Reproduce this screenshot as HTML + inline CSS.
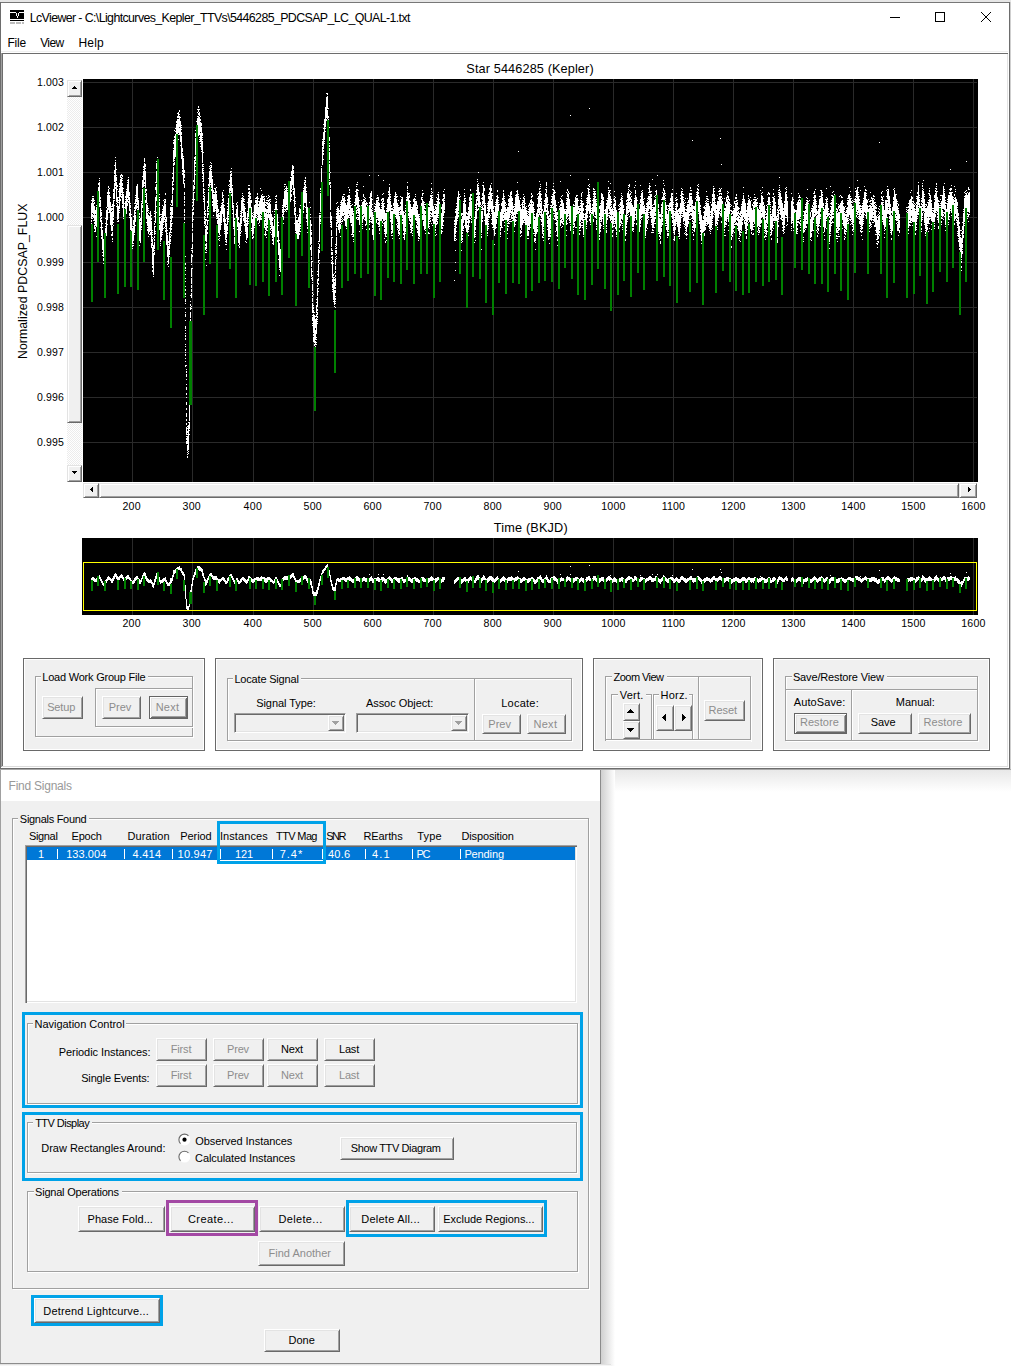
<!DOCTYPE html><html><head><meta charset="utf-8"><title>LcViewer</title><style>
*{margin:0;padding:0;box-sizing:content-box}
html,body{width:1011px;height:1366px;overflow:hidden;background:#fff;position:relative;font-family:"Liberation Sans",sans-serif}
body>div,body>svg{position:absolute}
.t{position:absolute;white-space:nowrap}
.btn{position:absolute;background:#f0f0f0;border:1px solid;border-color:#fff #696969 #696969 #fff;box-shadow:inset 1px 1px #e3e3e3,inset -1px -1px #a0a0a0}
.btnd{position:absolute;background:#f0f0f0;border:1px solid #646464;box-shadow:inset 1px 1px #fff,inset -1px -1px #696969,inset 2px 2px #e3e3e3,inset -2px -2px #a0a0a0}
.grp{position:absolute;border:1px solid #a0a0a0;box-shadow:inset 1px 1px #fff,1px 1px #fff}
.sbtn{position:absolute;background:#f0f0f0;border:1px solid;border-color:#e3e3e3 #696969 #696969 #e3e3e3;box-shadow:inset 1px 1px #fff,inset -1px -1px #a0a0a0}
.pnl{position:absolute;background:#f0f0f0;border:1px solid #696969;box-shadow:inset 1px 1px #fff,inset -1px -1px #fff}
</style></head><body><div style="left:0px;top:0px;width:1011px;height:2px;background:#e6e6e6"></div><div style="left:0px;top:2px;width:1010px;height:767px;background:#fff"></div><div style="left:0px;top:2px;width:1010px;height:1px;background:#777"></div><div style="left:0px;top:2px;width:1px;height:767px;background:#6d6d6d"></div><div style="left:1009px;top:2px;width:1px;height:767px;background:#6d6d6d"></div><div style="left:1010px;top:2px;width:1px;height:767px;background:#cfcfcf"></div><div style="left:0px;top:768px;width:1010px;height:1px;background:#6d6d6d"></div><div style="left:0px;top:769px;width:1011px;height:1px;background:#a8a8a8"></div><div style="left:1px;top:51px;width:1007px;height:1px;background:#f0f0f0"></div><div style="left:1px;top:53px;width:1007px;height:1px;background:#6d6d6d"></div><div style="left:1px;top:53px;width:1px;height:714px;background:#a0a0a0"></div><div style="left:2px;top:54px;width:1px;height:712px;background:#6d6d6d"></div><div style="left:1007px;top:54px;width:1px;height:712px;background:#e3e3e3"></div><div style="left:2px;top:766px;width:1006px;height:1px;background:#dcdcdc"></div><svg style="left:10px;top:10px" width="14" height="14" viewBox="0 0 14 14" shape-rendering="crispEdges"><rect x="0" y="0" width="14" height="2" fill="#000"/><rect x="0" y="3" width="14" height="6" fill="#000"/><path d="M6 2h3v1h-3z" fill="#000"/><path d="M6 3h1v3h1v-3h1v3h-1v2h-1v-2h-1z" fill="#fff"/><rect x="0" y="10" width="14" height="1" fill="#000"/><rect x="0" y="12" width="5" height="2" fill="#bdbdbd"/><rect x="6" y="12" width="5" height="2" fill="#bdbdbd"/><rect x="12" y="12" width="2" height="2" fill="#bdbdbd"/></svg><div class="t" style="left:29.71px;top:11.50px;font-size:12.4px;line-height:12.4px;color:#000;letter-spacing:-0.613px;">LcViewer - C:\Lightcurves_Kepler_TTVs\5446285_PDCSAP_LC_QUAL-1.txt</div><svg style="left:880px;top:5px" width="125" height="25" shape-rendering="crispEdges"><rect x="10" y="12" width="10" height="1" fill="#000"/><rect x="55.5" y="7.5" width="9" height="9" fill="none" stroke="#000" stroke-width="1"/></svg><svg style="left:980px;top:11px" width="13" height="13"><path d="M1 1L11 11M11 1L1 11" stroke="#000" stroke-width="1" fill="none"/></svg><div class="t" style="left:7.44px;top:36.84px;font-size:12px;line-height:12px;color:#000;letter-spacing:-0.193px;">File</div><div class="t" style="left:40.20px;top:36.84px;font-size:12px;line-height:12px;color:#000;letter-spacing:-0.607px;">View</div><div class="t" style="left:78.54px;top:36.84px;font-size:12px;line-height:12px;color:#000;letter-spacing:0.173px;">Help</div><svg style="left:83px;top:79px" width="895" height="403" shape-rendering="crispEdges"><rect width="895" height="403" fill="#000"/><path d="M49.5 0V403M109.5 0V403M170.5 0V403M230.5 0V403M290.5 0V403M350.5 0V403M410.5 0V403M470.5 0V403M530.5 0V403M590.5 0V403M650.5 0V403M710.5 0V403M770.5 0V403M830.5 0V403M890.5 0V403M0 3.5H894M0 48.5H894M0 93.5H894M0 138.5H894M0 183.5H894M0 228.5H894M0 273.5H894M0 318.5H894M0 363.5H894" stroke="#2a2a2a" stroke-width="1"/><path d="M8.5 121v1m0 2v16m0 1v2m0 1v1M9.5 117v1m0 1v15m0 1v3m0 1v1M10.5 117v1m0 1v4m0 1v11m0 1v3m0 2v1M11.5 121v1m0 1v2m0 2v15m0 1v2m0 1v4m0 2v1M12.5 131v4m0 1v11m0 1v5M13.5 126v1m0 1v20m0 9v1M14.5 115v24m0 1v1m0 1v1M15.5 104v2m0 2v18m0 1v2m0 1v2M16.5 99v1m0 1v1m0 1v20m0 1v4M17.5 118v2m0 1v7m0 1v9m0 1v4m0 5v1M18.5 131v1m0 1v4m0 1v2m0 1v16m0 1v2M19.5 144v1m0 3v1m0 2v20m0 2v1m0 2v1M20.5 160v18m0 1v3m0 2v1M21.5 156v5m0 1v17m0 1v1M22.5 139v1m0 4v1m0 2v1m0 1v8m0 1v2m0 1v5m0 1v1m0 1v1m0 1v1m0 1v1M23.5 128v1m0 2v26M24.5 113v2m0 1v12m0 1v12m0 4v1M25.5 107v2m0 1v21m0 2v1M26.5 109v1m0 3v2m0 1v18M27.5 118v1m0 4v23M28.5 127v1m0 1v3m0 1v19m0 3v2M29.5 125v3m0 1v2m0 1v14m0 1v5m0 1v4m0 2v2m0 1v1M30.5 110v3m0 1v6m0 1v17m0 1v2m0 2v1m0 2v1M31.5 86v1m0 4v4m0 1v7m0 1v16m0 1v1m0 4v1M32.5 78v1m0 2v1m0 1v24m0 1v2M33.5 90v1m0 5v1m0 1v4m0 1v20m0 1v1m0 2v1M34.5 106v2m0 2v1m0 7v6m0 1v16m0 1v1M35.5 112v1m0 5v1m0 2v1m0 1v1m0 3v13m0 1v2m0 5v1m0 1v1M36.5 104v2m0 1v1m0 1v21m0 1v1m0 1v1M37.5 96v3m0 1v18m0 2v2M38.5 95v2m0 1v16m0 1v1m0 1v2M39.5 96v2m0 1v1m0 1v1m0 2v3m0 1v17m0 1v3M40.5 109v1m0 3v1m0 1v23m0 1v1M41.5 124v1m0 3v1m0 1v17M42.5 117v2m0 1v1m0 1v20M43.5 110v1m0 1v23M44.5 101v1m0 1v1m0 1v14m0 1v3m0 1v3M45.5 98v1m0 1v21m0 1v2M46.5 113v4m0 1v14m0 2v3m0 1v1M47.5 124v1m0 1v3m0 1v21M48.5 135v1m0 2v22m0 2v1M49.5 147v1m0 1v16m0 1v2m0 1v1M50.5 137v1m0 3v5m0 1v15m0 2v1m0 1v1M51.5 124v1m0 3v2m0 1v23m0 1v1M52.5 116v1m0 1v1m0 1v5m0 1v6m0 1v2m0 1v7m0 3v1M53.5 107v16m0 1v6M54.5 105v21m0 1v2m0 1v2m0 2v1M55.5 119v1m0 1v24m0 1v1m0 1v2M56.5 134v2m0 1v2m0 1v22m0 4v1M57.5 139v3m0 1v21M58.5 122v1m0 1v22m0 1v2m0 1v1M59.5 97v1m0 3v8m0 1v15m0 1v3m0 3v1M60.5 87v2m0 1v1m0 1v16m0 1v3m0 2v1M61.5 79v4m0 1v17m0 2v2m0 1v1M62.5 85v3m0 1v1m0 2v17m0 1v4m0 1v1m0 1v1m0 3v3M63.5 110v2m0 2v10m0 1v15m0 3v1M64.5 124v1m0 1v7m0 1v13m0 1v1m0 1v2M65.5 129v1m0 1v1m0 1v1m0 2v19m0 2v1M66.5 134v1m0 2v16m0 2v1M67.5 132v20m0 1v3M68.5 136v1m0 2v2m0 1v21m0 1v5M69.5 151v1m0 1v1m0 1v1m0 2v1m0 1v7m0 1v18m0 1v2m0 2v2M70.5 159v1m0 6v7m0 1v22m0 1v1M71.5 132v1m0 1v1m0 2v1m0 4v1m0 1v2m0 1v9m0 1v2m0 1v2m0 1v7m0 1v1m0 1v3M72.5 103v1m0 4v3m0 7v26m0 3v1m0 4v1m0 1v1M73.5 82v1m0 1v6m0 2v12m0 1v10m0 1v6m0 5v1m0 5v1M74.5 78v1m0 1v25m0 5v1M75.5 91v1m0 2v1m0 2v1m0 2v14m0 1v8m0 1v7M76.5 115v1m0 2v1m0 1v2m0 1v4m0 1v9m0 1v7m0 1v5M77.5 135v1m0 2v1m0 3v21m0 1v1m0 1v1M78.5 135v1m0 1v1m0 1v19m0 1v2M79.5 126v1m0 3v1m0 1v20m0 1v1m0 1v1M80.5 121v1m0 5v17m0 1v1m0 3v1M81.5 120v1m0 1v15m0 1v3m0 1v1m0 5v1M82.5 114v2m0 4v4m0 1v14m0 1v8m0 1v1m0 1v2M83.5 138v5m0 1v22M84.5 151v1m0 2v1m0 1v22m0 4v1m0 2v1M85.5 162v2m0 1v1m0 1v18m0 2v1M86.5 149v1m0 3v17m0 1v5m0 1v1M87.5 125v1m0 2v4m0 1v3m0 1v3m0 1v13m0 1v1m0 1v2m0 1v3m0 1v1M88.5 121v3m0 2v1m0 1v15m0 1v4m0 1v2m0 2v1m0 2v1M89.5 94v1m0 3v2m0 2v5m0 1v7m0 1v11m0 1v8m0 1v2m0 5v1M90.5 61v1m0 1v2m0 4v1m0 1v12m0 1v3m0 1v15m0 2v1m0 3v2M91.5 51v1m0 5v2m0 1v20m0 1v1m0 1v3M92.5 49v1m0 2v1m0 2v23M93.5 42v2m0 1v18m0 1v2m0 1v1M94.5 34v1m0 2v2m0 1v19M95.5 33v6m0 1v14m0 1v1m0 4v1M96.5 31v2m0 2v1m0 1v11m0 1v7M97.5 38v1m0 3v21m0 3v1M98.5 46v1m0 1v1m0 1v1m0 2v3m0 1v23M99.5 69v4m0 1v16m0 1v2m0 1v2M100.5 77v1m0 1v26M101.5 91v3m0 1v4m0 2v1m0 2v5m0 4v3m0 1v4m0 1v2m0 1v2m0 3v4m0 1v2m0 1v3m0 2v2m0 1v2m0 1v1m0 1v1m0 4v1m0 2v2m0 4v3m0 1v3m0 1v1m0 2v3m0 2v1m0 1v1M102.5 177v1m0 6v2m0 2v2m0 1v1m0 3v1m0 3v1m0 2v1m0 4v1m0 2v2m0 2v2m0 1v1m0 2v3m0 1v1m0 4v1m0 3v1m0 1v3m0 3v1m0 5v3m0 1v1m0 2v1m0 1v2m0 1v2m0 4v1m0 1v1m0 2v2m0 1v1m0 1v2m0 2v1m0 2v1m0 3v2M103.5 286v1m0 3v1m0 1v2m0 1v3m0 2v1m0 4v1m0 2v3m0 3v2m0 2v1m0 4v3m0 3v2m0 3v4m0 2v2m0 2v2m0 2v8m0 1v1m0 1v2m0 1v3M104.5 347v1m0 1v1m0 2v2m0 1v1m0 1v8m0 1v6m0 1v1m0 1v1m0 1v2M105.5 343v1m0 2v25m0 1v1m0 1v1M106.5 312v1m0 2v5m0 1v21m0 1v7m0 1v1m0 3v1M107.5 216v1m0 5v1m0 2v2m0 1v3m0 2v6m0 1v5m0 3v3m0 2v2m0 1v1m0 1v2m0 3v2m0 1v1m0 3v1m0 3v2m0 2v1m0 1v1m0 1v1m0 2v2m0 1v1m0 4v1m0 3v1m0 1v4m0 1v2m0 1v2m0 1v4m0 1v1m0 7v1M108.5 169v1m0 1v1m0 3v9m0 1v1m0 3v9m0 1v6m0 1v3m0 1v3m0 1v5m0 8v1m0 1v1M109.5 120v1m0 2v1m0 2v2m0 2v2m0 1v10m0 1v5m0 1v2m0 2v9m0 2v5m0 1v3m0 2v2m0 11v1M110.5 101v2m0 3v6m0 1v14m0 1v3m0 2v3m0 4v1M111.5 78v2m0 1v25m0 1v3m0 3v1m0 6v1M112.5 51v1m0 2v4m0 1v17m0 1v5m0 1v2m0 2v1m0 3v1m0 3v1M113.5 42v1m0 3v21m0 5v2M114.5 30v1m0 2v1m0 3v1m0 1v10m0 1v7m0 1v2m0 1v1m0 10v1M115.5 27v2m0 1v3m0 1v2m0 1v20M116.5 30v1m0 2v4m0 1v18m0 2v1m0 1v1m0 1v1M117.5 37v1m0 2v2m0 1v10m0 1v9m0 1v1m0 2v1M118.5 44v3m0 1v23m0 1v1M119.5 54v3m0 1v1m0 1v1m0 1v22m0 1v3m0 1v6m0 2v1m0 1v1m0 2v1M120.5 73v1m0 11v1m0 1v1m0 1v1m0 1v1m0 1v10m0 1v4m0 1v6m0 1v2m0 1v2m0 1v1M121.5 110v1m0 2v1m0 1v1m0 1v14m0 1v4m0 1v4m0 1v3m0 1v1M122.5 131v2m0 1v3m0 1v1m0 1v6m0 1v2m0 1v12m0 3v2m0 1v3m0 2v1m0 6v1M123.5 140v2m0 4v17m0 1v6m0 1v1m0 1v1m0 12v1M124.5 122v2m0 3v6m0 1v5m0 2v5m0 1v4m0 2v2M125.5 99v1m0 5v2m0 1v1m0 1v2m0 1v15m0 1v1m0 2v1m0 1v2m0 5v1M126.5 87v1m0 1v1m0 2v22m0 3v1M127.5 83v1m0 2v1m0 1v16m0 1v1M128.5 84v1m0 1v3m0 1v1m0 1v17m0 1v2M129.5 97v1m0 2v20m0 2v2m0 1v2M130.5 111v3m0 1v18m0 3v1M131.5 105v1m0 3v1m0 3v1m0 1v18M132.5 109v21m0 1v1M133.5 108v1m0 3v2m0 1v23m0 1v1M134.5 121v2m0 1v1m0 1v8m0 1v5m0 1v4m0 1v1m0 1v2M135.5 130v3m0 1v20m0 3v1m0 2v1M136.5 134v1m0 1v2m0 1v17m0 1v1m0 1v1m0 1v1m0 4v1M137.5 128v1m0 3v19m0 5v1M138.5 124v1m0 1v18m0 1v1M139.5 113v6m0 1v2m0 1v12M140.5 111v1m0 4v1m0 2v5m0 1v13m0 1v4M141.5 126v1m0 2v22m0 1v1m0 1v1M142.5 140v3m0 1v17m0 1v1m0 2v1M143.5 139v1m0 5v14m0 1v4m0 1v1m0 4v1M144.5 124v1m0 2v1m0 2v1m0 1v14m0 1v5m0 1v2M145.5 106v1m0 9v1m0 2v17m0 1v1m0 1v2m0 1v1M146.5 101v2m0 2v1m0 1v1m0 1v17m0 1v1m0 3v1M147.5 92v2m0 1v17m0 1v2m0 1v1M148.5 89v1m0 2v1m0 1v3m0 1v16m0 1v2M149.5 106v1m0 2v20m0 1v1m0 3v1M150.5 124v1m0 1v22m0 1v1M151.5 139v2m0 1v15m0 1v7M152.5 135v1m0 3v2m0 2v19m0 1v2M153.5 124v2m0 1v1m0 2v21m0 3v1M154.5 123v1m0 2v22m0 2v1M155.5 138v3m0 2v21m0 2v1M156.5 144v22m0 1v2M157.5 132v1m0 1v1m0 1v2m0 1v13m0 1v2m0 1v1M158.5 119v1m0 1v24m0 1v1m0 5v1M159.5 114v1m0 1v1m0 1v14m0 1v1m0 3v1M160.5 117v1m0 1v4m0 1v14m0 1v3M161.5 120v1m0 1v1m0 2v1m0 1v17m0 1v2M162.5 129v1m0 3v20m0 1v1m0 7v1M163.5 139v1m0 1v2m0 1v17m0 2v1M164.5 123v1m0 8v1m0 1v13m0 1v11M165.5 106v1m0 2v2m0 2v2m0 1v2m0 1v19m0 1v1m0 2v1m0 1v1M166.5 106v1m0 2v2m0 1v18M167.5 114v2m0 1v3m0 1v18m0 2v1M168.5 121v3m0 4v16m0 5v1m0 1v1M169.5 134v1m0 1v2m0 2v17m0 1v2M170.5 133v1m0 1v1m0 1v18m0 2v2M171.5 126v21m0 1v1M172.5 119v1m0 1v3m0 1v17m0 1v1m0 2v1M173.5 118v2m0 1v14m0 1v1m0 1v1M174.5 114v2m0 1v19m0 1v1m0 1v3M175.5 119v1m0 2v1m0 2v2m0 1v13m0 3v1M176.5 122v22m0 2v1M177.5 109v1m0 9v16m0 1v5M178.5 111v1m0 4v20m0 1v1m0 1v2M179.5 115v1m0 1v19m0 1v2M180.5 117v2m0 1v1m0 2v19m0 1v2m0 2v1m0 2v1M181.5 117v1m0 1v19m0 1v1m0 1v8m0 6v1M182.5 123v1m0 1v2m0 2v4m0 1v9m0 1v3m0 1v3m0 1v5M183.5 117v1m0 3v1m0 1v2m0 1v1m0 3v22m0 3v1m0 2v1M184.5 119v1m0 1v1m0 1v3m0 1v2m0 1v4m0 1v11m0 1v2m0 2v1M185.5 116v1m0 1v1m0 2v2m0 1v15m0 2v2m0 1v1m0 1v1m0 1v1M186.5 117v1m0 2v2m0 1v11m0 1v7m0 1v3M187.5 120v1m0 1v1m0 2v21m0 1v1m0 1v2m0 2v1M188.5 135v15m0 1v1m0 3v1M189.5 132v1m0 5v4m0 1v16m0 1v2m0 2v1M190.5 139v1m0 7v19M191.5 130v1m0 1v1m0 2v1m0 1v2m0 1v18M192.5 117v1m0 1v1m0 3v1m0 1v19m0 2v2m0 5v1M193.5 116v2m0 2v1m0 1v2m0 1v19m0 1v1M194.5 130v1m0 4v23m0 3v2M195.5 143v1m0 2v1m0 5v24m0 4v1M196.5 161v1m0 2v25m0 1v1m0 5v1M197.5 170v23M198.5 140v1m0 6v1m0 1v2m0 1v6m0 1v5m0 1v2m0 1v3m0 1v6m0 1v1M199.5 126v1m0 1v1m0 1v4m0 1v11m0 1v2m0 2v4m0 1v2m0 1v1M200.5 120v16m0 1v4m0 3v1M201.5 105v1m0 1v1m0 2v1m0 1v16m0 2v1m0 1v1M202.5 105v1m0 3v1m0 1v18m0 1v2M203.5 107v19m0 1v1m0 1v2m0 1v1M204.5 109v1m0 1v1m0 1v18M205.5 111v4m0 1v18m0 4v1M206.5 107v3m0 2v14m0 1v2m0 1v2m0 1v1M207.5 98v1m0 3v21M208.5 92v5m0 1v12m0 1v2m0 2v3m0 2v1M209.5 86v20m0 4v1M210.5 87v3m0 1v4m0 1v15m0 1v4m0 5v1M211.5 109v19m0 1v7m0 8v1M212.5 118v1m0 3v1m0 1v1m0 3v5m0 1v18m0 1v1M213.5 138v1m0 2v20M214.5 136v1m0 4v19M215.5 138v5m0 1v16M216.5 129v5m0 1v18m0 1v2M217.5 126v1m0 3v15m0 1v2m0 1v1m0 2v1M218.5 123v1m0 1v2m0 1v17M219.5 116v2m0 1v2m0 1v2m0 1v12m0 1v4m0 2v1M220.5 109v1m0 1v20m0 1v2M221.5 101v1m0 1v3m0 1v17m0 3v1M222.5 98v2m0 1v3m0 1v19m0 4v1M223.5 108v1m0 3v1m0 1v20m0 1v5m0 2v1M224.5 128v19m0 1v2m0 3v1M225.5 133v1m0 1v21m0 2v1M226.5 123v1m0 8v2m0 1v3m0 1v16m0 1v5M227.5 128v1m0 6v1m0 2v1m0 2v25m0 2v3M228.5 145v2m0 4v1m0 1v3m0 2v7m0 1v11m0 1v3m0 1v6m0 1v9m0 1v1M229.5 182v1m0 9v1m0 3v1m0 1v4m0 1v1m0 1v7m0 1v2m0 1v2m0 1v4m0 1v10m0 2v1m0 1v4m0 2v1m0 1v1M230.5 215v1m0 10v1m0 1v2m0 1v3m0 1v19m0 1v2m0 1v5M231.5 233v1m0 2v28m0 1v2m0 2v1m0 1v2M232.5 237v1m0 2v9m0 2v10m0 1v4m0 1v2m0 1v1M233.5 220v1m0 2v1m0 2v8m0 1v3m0 1v16m0 3v1m0 1v1m0 2v1m0 1v1M234.5 192v1m0 2v1m0 4v5m0 1v2m0 1v8m0 1v10m0 2v2m0 1v3m0 1v2m0 1v1m0 1v1m0 1v1M235.5 162v1m0 1v1m0 3v1m0 1v10m0 1v3m0 1v13m0 1v3m0 2v2m0 3v1m0 2v1M236.5 134v1m0 1v27m0 2v5m0 1v3m0 7v1m0 2v1M237.5 109v2m0 1v1m0 1v19m0 1v1m0 1v3m0 1v3m0 1v1M238.5 87v1m0 1v15m0 1v9m0 7v2m0 5v1M239.5 60v1m0 1v5m0 1v18M240.5 45v1m0 3v1m0 3v17m0 1v2m0 1v2m0 4v1M241.5 40v21m0 1v1m0 1v1M242.5 28v20m0 1v1m0 2v1M243.5 14v1m0 3v21m0 1v2M244.5 14v2m0 1v13m0 1v9m0 1v5m0 1v1M245.5 29v1m0 7v2m0 1v22M246.5 48v1m0 9v4m0 2v1m0 1v2m0 1v3m0 1v8m0 1v2m0 1v8m0 1v6m0 1v1m0 1v3M247.5 93v1m0 9v2m0 1v3m0 1v21m0 2v11m0 1v1m0 1v1M248.5 137v4m0 1v7m0 2v6m0 1v10m0 1v3m0 1v3m0 2v1m0 2v1m0 1v2M249.5 158v1m0 12v1m0 1v3m0 1v4m0 1v17m0 1v3m0 2v4m0 1v1m0 1v1M250.5 184v1m0 10v2m0 1v23m0 1v1M251.5 194v1m0 3v1m0 1v2m0 1v7m0 1v15m0 1v1m0 14v2M252.5 165v1m0 1v1m0 1v1m0 1v3m0 1v1m0 2v1m0 1v6m0 1v4m0 1v2m0 2v2m0 1v8m0 1v2m0 1v3m0 3v1m0 1v2m0 1v1m0 1v1m0 3v1M253.5 124v1m0 5v1m0 1v1m0 1v2m0 1v3m0 1v1m0 1v5m0 1v8m0 1v9m0 1v2m0 1v4m0 2v1m0 1v1M254.5 123v1m0 4v17m0 2v1M255.5 127v1m0 1v15m0 1v6M256.5 131v2m0 1v1m0 1v18M257.5 123v1m0 1v1m0 1v17m0 1v5m0 7v1M258.5 121v18m0 1v1m0 1v1m0 1v1M259.5 117v5m0 1v14m0 2v1m0 1v2M260.5 115v1m0 1v1m0 1v14m0 1v3m0 3v1M261.5 115v1m0 2v18m0 1v5M262.5 121v1m0 2v23M263.5 126v22m0 1v1M264.5 117v1m0 2v2m0 1v21M265.5 108v1m0 7v19m0 1v3m0 3v1M266.5 110v2m0 1v1m0 2v14m0 1v6m0 1v1M267.5 119v1m0 2v1m0 1v1m0 1v18M268.5 126v1m0 2v15m0 1v2m0 8v1M269.5 125v1m0 3v7m0 1v19m0 1v1M270.5 132v1m0 1v20m0 1v3m0 2v1m0 1v1M271.5 123v1m0 2v5m0 1v20M272.5 112v1m0 3v2m0 1v22m0 1v1m0 1v1M273.5 105v1m0 1v1m0 2v16m0 2v2m0 1v4m0 3v2M274.5 103v1m0 1v1m0 4v2m0 1v16m0 1v2m0 1v1m0 2v1m0 1v1m0 1v1M275.5 111v1m0 6v17m0 1v1m0 1v3M276.5 121v1m0 4v2m0 1v17m0 6v1M277.5 131v1m0 1v1m0 1v14m0 1v4m0 1v1M278.5 121v1m0 4v1m0 2v1m0 1v1m0 1v19m0 3v1M279.5 123v13m0 1v7m0 1v1m0 1v1m0 1v1M280.5 107v1m0 7v3m0 2v1m0 1v13m0 1v4M281.5 118v1m0 1v18m0 2v1M282.5 119v1m0 1v2m0 1v18m0 3v2M283.5 123v3m0 2v18m0 4v1M284.5 124v1m0 1v1m0 2v2m0 1v1m0 1v18M285.5 130v3m0 1v2m0 1v14m0 1v3m0 2v1M286.5 96v1m0 21v1m0 4v2m0 1v14m0 1v3m0 1v1m0 3v2M287.5 114v24m0 2v1m0 1v1M288.5 112v6m0 1v10m0 1v11m0 1v2M289.5 120v1m0 4v1m0 3v1m0 1v1m0 1v12m0 1v3m0 1v6M290.5 136v1m0 1v23M291.5 124v1m0 2v1m0 2v1m0 1v19m0 1v2m0 2v1m0 3v1M292.5 125v1m0 1v13m0 1v8m0 1v1M293.5 119v1m0 1v18m0 1v4M294.5 116v1m0 1v2m0 1v18m0 1v1m0 3v1M295.5 96v1m0 21v4m0 1v19m0 1v3m0 1v1M296.5 124v3m0 1v20m0 1v3m0 2v1M297.5 130v24M298.5 120v2m0 2v1m0 1v1m0 1v1m0 1v18m0 1v1m0 2v1M299.5 115v1m0 3v2m0 1v18m0 2v2m0 2v1M300.5 101v1m0 12v1m0 4v4m0 1v18m0 2v1M301.5 124v1m0 2v1m0 3v11m0 1v6m0 1v3m0 1v1m0 4v1M302.5 134v7m0 1v16m0 4v2M303.5 129v1m0 1v2m0 1v21m0 2v1m0 3v1M304.5 120v4m0 1v19m0 4v1M305.5 112v2m0 1v1m0 2v20m0 2v1M306.5 105v1m0 2v24M307.5 115v1m0 1v2m0 1v1m0 1v18m0 1v2M308.5 126v2m0 1v2m0 1v19m0 1v3m0 1v1M309.5 129v2m0 1v13m0 1v8m0 2v1m0 2v1M310.5 124v3m0 1v1m0 1v19M311.5 117v1m0 1v22m0 1v1m0 2v1M312.5 113v23m0 1v1M313.5 115v1m0 1v2m0 1v20m0 5v1M314.5 117v1m0 6v19m0 1v1m0 1v3m0 1v1M315.5 121v1m0 4v1m0 1v22m0 1v4m0 1v1M316.5 128v4m0 1v1m0 1v1m0 1v15m0 1v3m0 3v1M317.5 117v1m0 5v2m0 2v4m0 1v15m0 2v1m0 1v1M318.5 118v1m0 1v21m0 2v2M319.5 118v21m0 1v2m0 1v2M320.5 132v20m0 2v2m0 2v1M321.5 133v1m0 2v25M322.5 126v1m0 2v1m0 1v2m0 1v14m0 1v4m0 1v1M323.5 118v1m0 1v20m0 1v1m0 3v1M324.5 103v1m0 3v3m0 1v1m0 1v19m0 7v1M325.5 114v2m0 1v16m0 1v3m0 1v1M326.5 114v1m0 1v3m0 2v21m0 2v1M327.5 122v1m0 2v14m0 1v3m0 2v4m0 1v1m0 2v1M328.5 128v1m0 1v24M329.5 128v19m0 1v2m0 1v1m0 2v1m0 1v1M330.5 120v3m0 2v18m0 1v2m0 1v3M331.5 119v24m0 3v1M332.5 115v1m0 1v1m0 2v1m0 1v16m0 1v2M333.5 122v5m0 1v14m0 1v1m0 2v3M334.5 126v4m0 1v15m0 1v4m0 1v2M335.5 135v22m0 1v2m0 1v1M336.5 135v1m0 1v1m0 1v19m0 1v1M337.5 130v1m0 2v19m0 1v1m0 1v1m0 6v1M338.5 118v3m0 3v22m0 2v1m0 2v1M339.5 111v1m0 2v3m0 1v1m0 1v15m0 1v5M340.5 114v1m0 7v19m0 1v5M341.5 123v1m0 1v1m0 1v3m0 1v20M342.5 125v1m0 3v1m0 2v3m0 1v14m0 1v1m0 2v1M343.5 136v1m0 1v2m0 1v16m0 1v1m0 1v1m0 1v2M344.5 134v1m0 1v21m0 1v1m0 1v1M345.5 125v1m0 2v21m0 4v2M346.5 122v5m0 1v13m0 1v1m0 1v1m0 2v1m0 1v1m0 4v1M347.5 116v2m0 1v13m0 1v2m0 1v2m0 1v1m0 1v2M348.5 104v1m0 4v2m0 1v1m0 1v1m0 1v16m0 2v2m0 1v1m0 6v1M349.5 113v1m0 2v1m0 1v1m0 1v18m0 2v2m0 4v1M350.5 127v18m0 1v7M351.5 125v1m0 4v1m0 1v3m0 1v16m0 10v1M352.5 125v1m0 1v3m0 1v4m0 1v13m0 1v2m0 1v1m0 2v1M353.5 118v1m0 3v1m0 2v2m0 1v15m0 1v2m0 9v1M354.5 115v1m0 3v2m0 1v17m0 1v1m0 1v3M355.5 113v1m0 1v20m0 1v1m0 1v1M356.5 120v1m0 2v17m0 1v4m0 4v1M357.5 126v22m0 1v1m0 1v1M358.5 128v2m0 4v16m0 1v4M359.5 120v2m0 3v22m0 1v2m0 2v1M360.5 112v1m0 2v3m0 1v18m0 1v1m0 2v2m0 3v1M361.5 110v1m0 4v5m0 1v1m0 1v8m0 1v2M371.5 141v2m0 1v2m0 1v1m0 1v13m0 39v1M372.5 130v1m0 1v2m0 3v18m0 1v2m0 1v1m0 1v1m0 9v1m0 11v1m0 7v1M373.5 124v1m0 2v1m0 1v17m0 2v1m0 3v1m0 7v1M374.5 118v22m0 1v1M375.5 112v20m0 1v2m0 1v2M376.5 115v1m0 2v1m0 1v24m0 4v1M377.5 117v1m0 9v3m0 1v20m0 1v1M378.5 134v3m0 3v22m0 1v1m0 7v1M379.5 134v2m0 1v15m0 1v2m0 1v2m0 1v2m0 1v1M380.5 122v1m0 1v20m0 3v3m0 1v1M381.5 110v1m0 3v1m0 1v2m0 1v22m0 5v1M382.5 119v1m0 1v2m0 2v24M383.5 133v2m0 2v16m0 1v9m0 1v1M384.5 134v2m0 1v4m0 1v2m0 2v10m0 1v5m0 3v1m0 1v1M385.5 128v3m0 1v19m0 1v1m0 3v1M386.5 118v4m0 1v17m0 1v3m0 3v1M387.5 110v2m0 3v22m0 2v1M388.5 115v2m0 2v2m0 1v17m0 1v1m0 1v2M389.5 121v2m0 3v20m0 3v1m0 10v1M390.5 131v21m0 1v3M391.5 138v1m0 1v19m0 4v1M392.5 125v2m0 1v1m0 1v1m0 1v15m0 1v3m0 2v1m0 1v1m0 1v1m0 3v1M393.5 111v1m0 2v2m0 2v1m0 1v20M394.5 100v1m0 1v1m0 2v11m0 1v5m0 2v2m0 4v2M395.5 93v1m0 10v1m0 1v1m0 1v20m0 1v2M396.5 113v3m0 1v26M397.5 123v3m0 1v1m0 1v16m0 2v1m0 1v1M398.5 119v1m0 6v1m0 1v1m0 1v1m0 1v22m0 1v1m0 1v2m0 11v1M399.5 106v1m0 7v3m0 1v3m0 1v4m0 1v4m0 1v8m0 1v2M400.5 103v1m0 2v19m0 1v1m0 2v2M401.5 109v3m0 4v21m0 4v1M402.5 124v1m0 1v25m0 1v1M403.5 135v24M404.5 124v1m0 1v1m0 1v2m0 1v1m0 2v18m0 1v2m0 1v1M405.5 115v1m0 1v3m0 2v17m0 1v1m0 1v1m0 1v2m0 1v1m0 1v1M406.5 109v2m0 2v3m0 1v16m0 1v2m0 1v2M407.5 106v24m0 6v1M408.5 104v1m0 4v3m0 2v7m0 1v11m0 1v1m0 5v1m0 3v1M409.5 114v1m0 1v1m0 3v26m0 2v1M410.5 127v3m0 1v18m0 1v1M411.5 127v1m0 5v24m0 8v1M412.5 123v1m0 1v1m0 1v23m0 4v1M413.5 117v1m0 2v19m0 1v5m0 3v1M414.5 111v2m0 3v21m0 1v1M415.5 118v1m0 2v1m0 1v1m0 1v26m0 1v1M416.5 125v1m0 6v2m0 1v1m0 1v18m0 1v1m0 1v1M417.5 133v14m0 1v4m0 1v3m0 1v1M418.5 124v3m0 3v19M419.5 119v2m0 1v20m0 6v1M420.5 111v2m0 1v21m0 1v3m0 1v2M421.5 117v1m0 1v1m0 1v12m0 1v7m0 2v1m0 2v1m0 5v1M422.5 123v2m0 1v1m0 1v22M423.5 125v1m0 4v2m0 1v18m0 1v2M424.5 128v15m0 1v1m0 1v2m0 1v3m0 2v1m0 4v1M425.5 116v1m0 3v3m0 1v3m0 1v14m0 1v2m0 2v1M426.5 117v1m0 1v20m0 1v1m0 1v1m0 1v1M427.5 113v21m0 1v1m0 4v1m0 1v1M428.5 112v4m0 1v14m0 1v3m0 1v4m0 2v1M429.5 119v3m0 1v14m0 1v2m0 1v2m0 1v2m0 2v1m0 1v1M430.5 127v2m0 1v1m0 2v15m0 1v2m0 2v1M431.5 125v1m0 1v1m0 1v7m0 1v11m0 4v1M432.5 116v1m0 1v21m0 1v3m0 2v1M433.5 112v1m0 2v20m0 3v1m0 2v1M434.5 103v1m0 7v22m0 1v1M435.5 72v1m0 42v1m0 1v20m0 3v2M436.5 121v20m0 2v3m0 1v3M437.5 119v1m0 6v1m0 1v21m0 2v4m0 2v1M438.5 125v1m0 4v21m0 1v2m0 2v1M439.5 121v1m0 1v23M440.5 115v1m0 2v2m0 1v3m0 1v1m0 1v2m0 1v10m0 1v3M441.5 117v1m0 1v23m0 1v1M442.5 124v1m0 3v20m0 3v1M443.5 127v1m0 1v1m0 1v20m0 1v2M444.5 132v1m0 1v1m0 1v21m0 2v1M445.5 126v2m0 2v1m0 1v2m0 1v1m0 1v10m0 1v3m0 1v5m0 2v1M446.5 124v3m0 1v23M447.5 121v3m0 1v20m0 3v1M448.5 114v2m0 1v2m0 1v18m0 2v1m0 2v1M449.5 116v2m0 4v2m0 1v13m0 1v3m0 1v1m0 1v3M450.5 123v4m0 1v22m0 4v1M451.5 130v1m0 1v1m0 2v1m0 1v3m0 1v12m0 1v1m0 1v1m0 2v4M452.5 138v20m0 1v3m0 1v1m0 6v1M453.5 134v21M454.5 115v1m0 3v1m0 5v3m0 2v17m0 1v1m0 1v3M455.5 114v1m0 2v17m0 1v3m0 2v1m0 1v3m0 1v1M456.5 102v1m0 6v2m0 1v16m0 1v7M457.5 105v1m0 1v1m0 1v1m0 2v1m0 1v9m0 1v7m0 1v2m0 1v2m0 3v1M458.5 115v1m0 3v2m0 1v17m0 1v3m0 2v1M459.5 130v2m0 3v20m0 2v2M460.5 126v1m0 5v16m0 1v1m0 1v2m0 1v3m0 1v1m0 2v1M461.5 121v2m0 1v1m0 1v17m0 1v4M462.5 110v1m0 3v4m0 1v15m0 1v2m0 1v1M463.5 103v4m0 1v1m0 1v4m0 1v14m0 2v2m0 1v2M464.5 118v6m0 1v15m0 1v4m0 1v2m0 2v1M465.5 125v1m0 6v3m0 2v21m0 1v2M466.5 136v2m0 1v19m0 1v1m0 4v1M467.5 126v1m0 1v1m0 1v4m0 1v15m0 1v4m0 1v2M468.5 117v1m0 2v1m0 1v2m0 2v5m0 1v16m0 1v1M469.5 110v1m0 4v1m0 1v10m0 1v10m0 1v2M470.5 104v1m0 2v1m0 2v2m0 1v13m0 1v5m0 2v1m0 4v1M471.5 111v4m0 1v17m0 1v1m0 1v2m0 2v1M472.5 113v1m0 7v20m0 3v1m0 7v1M473.5 126v1m0 2v3m0 1v9m0 1v4m0 1v4m0 4v1M474.5 133v3m0 1v3m0 1v17m0 2v2m0 4v1M475.5 123v1m0 10v3m0 1v17m0 1v2M476.5 127v1m0 1v3m0 2v20m0 2v1M477.5 102v1m0 16v1m0 2v1m0 2v2m0 1v12m0 1v6M478.5 117v1m0 2v7m0 1v11m0 1v4m0 4v1M479.5 116v1m0 4v20m0 1v3m0 2v1M480.5 124v19m0 1v2M481.5 130v16m0 1v3m0 4v2M482.5 130v1m0 1v19m0 3v2m0 1v1m0 3v1M483.5 113v1m0 5v1m0 1v1m0 1v3m0 1v2m0 1v10m0 1v5m0 5v1m0 4v1M484.5 110v2m0 2v4m0 1v19m0 2v1m0 3v1M485.5 112v2m0 1v20m0 1v1m0 2v1M486.5 114v1m0 5v22m0 1v1M487.5 36v1m0 59v1m0 30v17m0 1v1m0 1v5M488.5 129v1m0 1v21m0 1v2m0 1v1m0 1v1M489.5 133v22m0 1v1m0 3v1M490.5 125v2m0 1v18m0 1v2m0 1v1m0 1v3M491.5 122v1m0 3v1m0 1v15m0 1v4M492.5 118v24m0 6v1M493.5 116v2m0 1v17m0 1v1m0 10v1M494.5 116v1m0 2v25m0 2v1M495.5 121v1m0 5v4m0 1v17m0 1v1m0 2v2M496.5 127v1m0 1v5m0 1v12m0 1v2m0 1v1m0 2v2M497.5 121v1m0 2v1m0 1v2m0 1v3m0 1v10m0 1v5m0 2v1M498.5 114v4m0 1v1m0 1v20m0 2v1m0 2v1M499.5 113v1m0 8v1m0 1v18m0 1v1m0 2v1m0 1v1M500.5 124v2m0 3v3m0 2v5m0 1v16m0 1v1M501.5 135v1m0 2v1m0 1v22m0 1v1M502.5 127v1m0 2v1m0 3v21m0 3v2M503.5 119v1m0 1v1m0 1v1m0 2v20m0 1v1m0 1v1M504.5 109v1m0 6v1m0 1v17m0 1v3m0 3v1M505.5 100v1m0 5v1m0 2v16m0 1v6M506.5 29v1m0 75v1m0 1v1m0 2v1m0 2v1m0 1v20m0 2v1m0 2v2M507.5 119v1m0 1v2m0 1v10m0 1v9m0 1v1M508.5 129v1m0 1v1m0 1v20m0 3v1m0 1v1M509.5 121v1m0 3v2m0 1v17m0 1v1m0 1v2m0 6v1M510.5 109v2m0 1v1m0 1v2m0 1v1m0 1v18m0 3v3M511.5 110v1m0 1v21m0 4v1M512.5 112v1m0 1v2m0 1v2m0 1v16m0 1v2M513.5 120v1m0 1v1m0 1v3m0 1v12m0 1v5m0 1v1m0 1v2M514.5 125v1m0 5v1m0 1v22m0 2v2M515.5 134v1m0 2v23M516.5 127v3m0 4v3m0 1v17m0 1v2m0 1v2M517.5 124v1m0 1v15m0 1v1m0 1v6m0 1v2M518.5 114v6m0 1v22m0 3v1M519.5 115v23m0 1v1M520.5 118v3m0 1v24m0 1v1m0 1v1M521.5 131v1m0 2v1m0 1v19m0 1v1m0 3v1M522.5 130v21m0 2v1m0 1v2m0 4v1M523.5 121v1m0 2v2m0 1v18m0 1v2m0 1v1m0 1v3M524.5 119v1m0 1v17m0 1v2M525.5 102v1m0 5v2m0 1v1m0 1v17m0 4v1m0 1v1M526.5 111v3m0 1v17m0 1v2m0 1v3M527.5 104v1m0 6v1m0 2v1m0 2v10m0 1v8m0 1v5M528.5 120v1m0 1v2m0 1v1m0 1v2m0 1v11m0 1v6m0 1v1M529.5 129v7m0 1v12m0 2v3m0 2v2M530.5 120v1m0 4v4m0 1v1m0 1v13m0 2v1m0 3v1M531.5 112v1m0 4v1m0 1v4m0 1v14m0 1v2m0 1v1m0 1v1m0 1v2M532.5 118v1m0 2v6m0 1v17m0 3v2M533.5 131v21m0 1v3m0 1v1M534.5 133v1m0 3v3m0 1v15m0 1v1m0 2v1M535.5 126v1m0 3v1m0 2v6m0 1v15m0 1v1m0 1v2M536.5 125v1m0 1v1m0 1v2m0 1v17m0 2v2M537.5 120v1m0 2v4m0 1v7m0 1v8m0 1v2M538.5 114v1m0 1v1m0 1v22m0 2v3M539.5 117v1m0 1v1m0 1v20m0 3v1m0 1v1m0 1v1m0 1v1M540.5 126v3m0 1v13m0 1v5m0 1v1m0 7v1M541.5 130v1m0 5v1m0 1v1m0 1v21m0 2v1m0 3v1M542.5 136v21m0 3v2M543.5 121v2m0 1v2m0 1v19m0 1v2m0 2v1m0 2v1M544.5 114v5m0 1v2m0 1v12m0 1v1m0 1v3m0 1v1M545.5 106v1m0 1v1m0 1v1m0 1v18m0 1v3m0 1v1M546.5 105v3m0 3v1m0 3v7m0 1v10m0 4v1M547.5 112v1m0 1v2m0 2v3m0 1v15m0 1v1m0 2v2m0 2v1M548.5 113v1m0 3v1m0 2v3m0 1v20m0 1v1m0 1v1M549.5 126v22m0 1v3M550.5 128v20m0 1v2m0 1v1M551.5 108v1m0 10v1m0 1v21m0 2v1M552.5 102v1m0 3v1m0 4v4m0 1v16m0 3v1m0 2v1M553.5 118v11m0 1v11m0 3v2M554.5 121v1m0 6v9m0 1v16m0 1v1m0 2v1M555.5 131v2m0 1v2m0 2v1m0 1v18m0 3v1M556.5 124v1m0 5v23M557.5 106v1m0 10v1m0 2v4m0 1v15m0 1v4m0 1v2M558.5 112v1m0 1v22m0 1v2m0 1v1M559.5 111v1m0 1v22m0 2v1M560.5 120v1m0 1v4m0 1v19m0 1v1m0 1v1M561.5 119v1m0 6v29M562.5 129v1m0 1v1m0 1v24m0 1v1M563.5 124v2m0 1v1m0 1v20m0 2v1M564.5 119v1m0 1v1m0 1v17m0 1v4m0 4v1M565.5 109v1m0 3v1m0 3v4m0 1v10m0 1v1m0 1v1m0 1v2m0 1v1M566.5 104v1m0 1v8m0 1v1m0 1v9m0 1v3m0 3v1M567.5 107v1m0 4v2m0 1v16m0 1v5m0 1v1M568.5 112v1m0 2v3m0 1v20m0 1v4m0 1v1m0 7v1M569.5 100v1m0 25v1m0 1v1m0 1v19m0 1v2m0 1v1M570.5 125v1m0 2v21m0 2v1m0 1v1M571.5 117v1m0 3v5m0 2v9m0 1v5m0 1v1m0 3v1M572.5 106v1m0 5v1m0 3v1m0 1v1m0 1v13m0 1v3m0 1v2m0 4v1M573.5 111v9m0 2v17m0 1v1M574.5 96v1m0 24v2m0 1v2m0 1v19m0 1v1M575.5 125v4m0 1v23m0 1v1M576.5 133v1m0 1v3m0 1v16m0 1v2m0 2v1M577.5 135v3m0 2v16m0 1v3m0 2v3M578.5 120v1m0 4v2m0 1v20m0 1v4M579.5 113v1m0 4v3m0 2v12m0 1v2m0 1v4m0 1v2M580.5 101v1m0 2v1m0 4v3m0 2v19m0 1v1M581.5 106v1m0 4v5m0 1v16m0 1v2m0 2v2m0 3v1M582.5 114v1m0 1v1m0 2v1m0 1v1m0 1v17m0 1v1m0 2v1m0 1v1M583.5 126v5m0 1v13m0 1v1m0 1v3M584.5 126v1m0 3v1m0 4v18m0 1v3m0 1v1M585.5 126v2m0 1v1m0 1v20m0 1v1m0 1v3M586.5 124v21m0 1v3m0 2v1M587.5 119v3m0 1v5m0 1v12m0 2v2M588.5 114v21m0 2v1M589.5 110v1m0 3v2m0 1v23m0 1v3m0 2v1M590.5 123v1m0 1v1m0 3v1m0 1v16m0 1v4m0 1v1m0 6v1M591.5 132v1m0 1v3m0 1v1m0 1v16m0 1v5M592.5 119v1m0 1v1m0 3v1m0 1v1m0 1v2m0 1v15m0 1v3M593.5 114v1m0 3v1m0 1v2m0 1v20m0 1v1M594.5 120v1m0 3v4m0 3v17M595.5 130v3m0 1v19m0 1v1m0 2v1M596.5 129v6m0 1v22m0 1v1M597.5 116v1m0 2v1m0 4v20m0 1v2m0 1v1M598.5 109v1m0 2v23m0 1v1m0 1v1M599.5 110v1m0 1v1m0 1v2m0 1v16m0 1v1m0 1v2M600.5 115v1m0 2v1m0 1v1m0 1v16m0 1v4m0 1v1M601.5 121v1m0 2v1m0 1v1m0 1v14m0 3v1m0 1v1m0 6v1M602.5 119v1m0 3v1m0 6v1m0 2v14m0 1v2m0 1v1m0 1v1m0 1v1M603.5 127v1m0 2v2m0 1v20m0 1v3m0 2v1M604.5 119v1m0 3v1m0 1v23m0 7v1M605.5 121v3m0 1v16m0 1v3M606.5 114v20m0 1v2m0 3v1M607.5 108v2m0 1v1m0 2v2m0 1v10m0 1v5m0 1v2m0 4v1M608.5 111v1m0 2v2m0 1v16m0 1v3m0 2v1M609.5 61v1m0 59v4m0 1v14m0 1v2m0 1v1m0 2v2m0 1v1m0 2v1M610.5 127v3m0 1v10m0 1v7m0 2v1m0 3v2m0 3v1M611.5 127v4m0 1v21M612.5 119v1m0 3v21m0 1v4M613.5 113v1m0 1v1m0 1v2m0 1v20m0 1v2M614.5 106v1m0 2v2m0 1v22m0 2v1m0 3v2M615.5 105v1m0 1v1m0 2v2m0 1v2m0 1v17m0 1v1M616.5 118v4m0 1v19m0 1v2M617.5 126v2m0 1v1m0 1v19m0 1v2m0 2v1M618.5 136v26m0 2v1M619.5 141v17m0 1v4M620.5 128v1m0 4v1m0 3v3m0 1v12m0 2v3m0 1v1m0 2v2M621.5 127v3m0 2v20m0 2v3M622.5 122v1m0 1v1m0 1v1m0 1v19m0 1v3M623.5 112v1m0 4v1m0 1v1m0 1v1m0 1v14m0 1v5m0 1v1m0 1v1M624.5 117v1m0 1v2m0 1v1m0 1v22M625.5 120v1m0 1v1m0 1v21m0 2v1M626.5 127v23m0 1v1M627.5 123v1m0 8v2m0 1v1m0 1v14m0 1v1m0 1v1M628.5 125v2m0 2v20m0 1v1M629.5 115v3m0 1v21m0 1v1m0 1v1m0 1v1m0 3v1M630.5 107v1m0 1v13m0 1v9m0 2v1m0 2v1M631.5 109v1m0 2v1m0 2v19m0 1v1M632.5 119v1m0 3v1m0 1v23M633.5 126v4m0 1v14m0 1v6M634.5 116v1m0 5v20m0 1v3m0 2v1m0 1v1M635.5 112v1m0 5v3m0 1v17m0 2v1M636.5 109v1m0 1v2m0 1v2m0 1v15m0 1v2M637.5 59v1m0 50v3m0 1v1m0 2v13m0 2v1m0 1v3M638.5 85v1m0 23v1m0 4v2m0 1v2m0 1v18m0 4v2M639.5 119v1m0 2v5m0 1v10m0 1v4m0 1v1m0 1v1m0 6v1M640.5 125v1m0 3v1m0 1v2m0 1v16m0 1v5m0 2v1M641.5 119v1m0 9v2m0 1v17m0 1v2m0 1v1m0 2v1M642.5 123v4m0 2v13m0 1v3m0 1v1m0 8v1M643.5 118v5m0 2v18m0 1v2M644.5 112v1m0 1v1m0 1v3m0 1v18m0 1v1M645.5 113v1m0 3v4m0 1v21m0 3v1m0 4v1M646.5 120v2m0 1v24M647.5 125v1m0 1v1m0 3v1m0 3v4m0 1v10m0 1v3m0 2v1M648.5 126v1m0 4v2m0 1v2m0 1v20m0 1v3m0 6v2M649.5 132v3m0 2v18m0 1v2M650.5 127v1m0 1v1m0 1v19m0 1v2M651.5 122v3m0 4v15m0 1v1m0 1v2m0 4v1M652.5 118v2m0 2v1m0 1v19m0 1v2M653.5 115v2m0 1v2m0 1v2m0 1v14m0 1v2m0 2v3m0 1v1M654.5 121v1m0 1v3m0 1v5m0 1v4m0 1v4m0 2v3m0 2v1M655.5 128v3m0 1v3m0 1v16m0 7v1M656.5 129v1m0 4v2m0 1v2m0 1v16m0 1v1m0 1v1m0 1v1M657.5 132v5m0 1v13m0 1v2m0 1v2m0 5v1M658.5 125v1m0 1v8m0 1v16m0 1v1M659.5 120v1m0 1v20m0 1v3M660.5 108v1m0 5v1m0 1v22m0 2v1M661.5 120v20m0 1v4M662.5 124v18m0 1v7m0 1v1m0 1v2M663.5 131v2m0 1v21m0 2v3M664.5 124v2m0 1v16m0 1v3m0 3v1M665.5 116v2m0 1v1m0 1v17m0 1v2m0 2v1M666.5 120v23m0 2v1M667.5 118v1m0 3v28M668.5 121v1m0 7v23m0 1v2M669.5 125v2m0 4v20m0 4v1M670.5 120v1m0 2v2m0 1v17m0 2v1m0 1v1m0 2v1m0 3v2M671.5 115v1m0 2v1m0 1v1m0 1v7m0 1v15m0 2v1M672.5 118v1m0 1v19m0 1v1m0 1v1m0 1v1m0 2v1M673.5 120v2m0 1v14m0 1v3m0 1v5m0 3v1M674.5 119v1m0 3v2m0 1v1m0 1v20m0 4v1M675.5 130v17m0 1v4m0 1v1m0 1v1M676.5 124v1m0 1v4m0 1v17m0 1v1m0 1v3M677.5 111v1m0 12v21m0 1v2M678.5 114v1m0 1v17m0 1v5m0 2v3M679.5 108v1m0 4v1m0 3v21m0 3v1m0 1v1M680.5 119v1m0 3v3m0 1v14m0 1v4M681.5 126v24m0 1v1m0 1v1m0 3v2M682.5 132v2m0 1v1m0 2v1m0 2v12m0 1v1m0 1v2m0 2v1M683.5 126v1m0 3v1m0 3v2m0 1v7m0 1v5m0 1v5m0 1v1M684.5 115v1m0 6v1m0 2v1m0 1v18m0 2v1m0 4v1M685.5 113v2m0 3v19m0 1v1m0 1v1m0 1v1m0 1v1M686.5 114v2m0 2v25m0 2v1M687.5 123v1m0 1v1m0 1v1m0 1v2m0 1v2m0 1v16m0 2v1m0 1v2M688.5 135v1m0 1v19m0 3v2M689.5 118v1m0 3v1m0 4v2m0 1v19m0 2v1M690.5 110v1m0 3v2m0 2v20m0 1v3m0 4v1m0 2v1M691.5 117v1m0 1v23m0 1v1M692.5 123v2m0 1v25m0 1v1m0 1v1m0 3v1M693.5 137v19m0 4v1m0 3v1M694.5 130v2m0 1v1m0 1v3m0 1v19m0 1v5M695.5 111v1m0 1v1m0 1v1m0 1v1m0 2v6m0 1v3m0 1v10m0 1v1m0 3v2M696.5 98v1m0 7v1m0 1v1m0 1v2m0 1v16m0 1v2m0 2v1M697.5 112v1m0 1v22m0 3v1M698.5 118v2m0 1v20M699.5 124v15m0 1v2m0 1v3m0 2v1m0 2v1M700.5 129v2m0 1v21m0 1v1M701.5 122v2m0 1v21m0 1v2m0 1v1m0 2v1M702.5 109v1m0 3v23m0 2v1M703.5 108v1m0 1v1m0 1v2m0 1v22m0 1v1m0 7v1M704.5 118v1m0 3v21m0 2v1M708.5 114v1m0 7v23m0 2v1m0 1v1m0 1v1M709.5 118v24m0 1v1M710.5 120v1m0 2v2m0 2v22m0 2v1M711.5 130v4m0 2v2m0 1v14m0 1v3m0 2v1m0 1v2M712.5 131v2m0 3v3m0 1v2m0 1v3m0 1v12m0 2v1m0 2v1m0 1v1M713.5 125v1m0 5v24M714.5 123v18m0 1v2m0 1v2m0 2v2m0 1v1m0 1v1M715.5 114v1m0 3v1m0 2v20m0 1v2M716.5 116v3m0 1v2m0 1v17m0 3v2M717.5 118v1m0 2v17m0 1v1m0 1v2m0 1v3m0 1v1m0 2v1M718.5 126v26m0 2v3M719.5 125v1m0 7v22m0 1v3M720.5 132v1m0 3v1m0 3v1m0 1v12m0 4v1m0 1v1m0 1v1M721.5 132v18m0 1v2M722.5 125v1m0 1v3m0 1v18m0 1v1M723.5 118v1m0 2v1m0 1v11m0 1v6m0 1v3m0 2v2M724.5 110v1m0 8v1m0 1v24M725.5 122v1m0 1v1m0 1v1m0 1v16m0 1v1m0 1v1m0 6v1M726.5 121v1m0 7v1m0 1v17m0 2v3M727.5 133v5m0 2v19m0 1v1M728.5 129v1m0 1v2m0 5v15m0 1v4m0 3v1M729.5 126v2m0 1v23M730.5 114v1m0 3v1m0 2v1m0 1v3m0 1v14m0 2v1m0 7v1M731.5 112v3m0 1v18m0 1v3M732.5 110v1m0 5v3m0 1v17m0 2v1m0 2v2M733.5 122v1m0 1v1m0 1v3m0 1v6m0 1v8m0 1v1m0 4v1M734.5 132v3m0 1v15m0 1v2m0 2v2M735.5 126v3m0 1v18m0 1v3m0 2v1M736.5 117v1m0 2v25m0 1v1M737.5 111v1m0 5v1m0 1v14m0 2v3m0 1v1m0 7v1M738.5 111v24m0 1v1M739.5 113v1m0 1v2m0 1v24m0 2v1M740.5 124v3m0 1v3m0 1v16m0 5v1M741.5 130v23m0 3v1m0 3v1M742.5 120v1m0 3v1m0 1v23M743.5 109v1m0 8v1m0 1v16m0 1v3m0 1v1m0 7v1M744.5 119v2m0 1v1m0 1v21M745.5 129v2m0 1v1m0 1v3m0 1v15m0 2v1M746.5 134v2m0 1v2m0 2v3m0 1v10m0 1v7m0 1v1m0 4v1M747.5 107v1m0 16v1m0 2v1m0 3v3m0 1v2m0 1v15m0 1v1m0 1v1M748.5 116v1m0 4v1m0 1v3m0 1v15m0 1v2m0 1v1M749.5 113v1m0 2v2m0 1v17m0 1v3m0 2v2M750.5 112v1m0 4v16m0 1v2m0 1v2m0 4v1M751.5 115v1m0 1v1m0 3v1m0 1v16m0 1v1m0 1v1M752.5 122v1m0 3v16m0 1v3m0 1v1m0 1v1m0 1v1M753.5 124v1m0 4v2m0 1v16m0 1v5m0 2v2m0 1v1M754.5 130v3m0 1v16m0 1v3m0 3v1m0 1v1m0 2v1M755.5 125v1m0 1v3m0 3v19m0 1v1m0 1v1m0 1v1M756.5 117v1m0 8v3m0 1v2m0 1v15m0 1v2m0 6v1M757.5 116v1m0 7v21m0 1v1m0 1v1M758.5 117v2m0 3v23m0 2v1M759.5 118v1m0 2v20m0 3v1m0 4v1M760.5 124v1m0 2v20M761.5 128v3m0 1v1m0 1v15m0 1v5m0 2v1m0 1v2M762.5 127v1m0 5v1m0 1v2m0 1v12m0 1v2m0 1v2m0 2v1M763.5 129v1m0 1v3m0 1v16m0 1v1M764.5 119v1m0 1v1m0 1v3m0 2v10m0 1v4m0 1v1m0 1v1m0 1v1M765.5 116v4m0 1v17m0 1v1m0 1v1m0 1v2M766.5 108v1m0 6v21m0 4v1M767.5 112v1m0 4v1m0 1v20m0 1v2m0 3v1M768.5 119v1m0 2v2m0 1v16m0 1v1m0 1v1M769.5 121v1m0 1v1m0 3v2m0 1v16m0 1v1m0 2v2m0 3v1M770.5 122v1m0 4v1m0 1v15m0 1v6m0 1v1M771.5 120v1m0 1v1m0 1v17m0 4v2M772.5 109v1m0 2v1m0 4v1m0 1v16m0 1v2m0 6v1M773.5 111v8m0 1v13m0 1v1m0 1v2M774.5 101v1m0 6v23m0 1v4m0 2v1M775.5 108v1m0 4v1m0 1v1m0 1v17m0 1v1m0 1v1m0 1v1M776.5 117v1m0 2v2m0 1v2m0 1v15m0 1v3M777.5 111v1m0 14v2m0 1v7m0 1v9m0 1v1m0 1v1m0 1v2M778.5 127v1m0 1v1m0 1v3m0 1v16m0 1v2m0 2v1M779.5 124v1m0 1v21m0 1v2m0 2v1m0 7v1M780.5 119v1m0 1v18m0 1v1m0 1v1m0 1v1M781.5 107v1m0 5v20m0 2v1M782.5 110v2m0 1v21m0 2v1M783.5 111v1m0 2v1m0 1v1m0 3v20M784.5 121v3m0 2v25M785.5 120v1m0 6v1m0 2v22M786.5 122v1m0 3v2m0 1v16m0 1v2m0 1v1m0 2v1M787.5 113v1m0 7v2m0 1v1m0 1v15m0 2v4m0 1v1M788.5 118v2m0 1v1m0 2v2m0 1v15m0 3v1m0 1v1M789.5 119v9m0 1v10m0 1v1m0 2v1M790.5 116v2m0 1v1m0 1v11m0 1v3m0 1v2m0 1v2m0 1v1M791.5 117v1m0 2v1m0 2v2m0 1v17m0 3v2M792.5 123v1m0 1v1m0 1v3m0 1v17m0 3v1m0 3v1M793.5 126v1m0 1v2m0 2v1m0 4v17m0 1v1m0 4v1m0 3v1M794.5 136v1m0 1v1m0 2v20m0 1v1m0 1v2m0 2v1M795.5 129v1m0 2v1m0 2v1m0 1v19m0 1v3m0 2v2M796.5 63v1m0 63v1m0 2v1m0 2v2m0 1v15m0 1v2m0 1v2M797.5 126v20m0 1v1m0 1v1m0 2v1M798.5 113v2m0 2v2m0 1v1m0 2v19m0 1v2M799.5 112v1m0 5v4m0 1v13m0 1v4m0 1v1M800.5 117v1m0 3v1m0 1v1m0 1v1m0 1v19M801.5 131v19m0 1v1m0 2v1m0 3v1M802.5 121v27m0 2v1M803.5 111v1m0 5v1m0 3v24M804.5 107v1m0 2v1m0 1v8m0 1v2m0 1v11m0 3v4M805.5 110v18m0 1v1m0 1v4M806.5 117v19m0 1v3m0 1v2m0 1v2M807.5 125v3m0 1v21m0 1v1m0 1v1M808.5 132v2m0 2v20m0 3v2M809.5 128v8m0 1v15M810.5 110v1m0 7v3m0 1v25m0 6v1M811.5 109v1m0 1v24M812.5 115v19m0 1v4m0 1v1M813.5 115v1m0 4v16m0 1v5m0 2v1M814.5 122v1m0 1v1m0 2v15m0 1v1m0 1v7M815.5 125v2m0 2v1m0 1v21m0 4v1M816.5 135v5m0 1v8m0 2v3M823.5 128v1m0 1v1m0 1v1m0 1v4m0 1v2m0 1v4m0 1v1m0 2v1m0 1v1M824.5 128v1m0 2v1m0 1v18m0 1v2M825.5 124v1m0 2v2m0 1v19m0 1v2m0 2v1M826.5 121v20m0 1v2m0 1v2M827.5 113v1m0 6v24m0 2v1M828.5 111v1m0 5v13m0 1v6m0 2v3m0 1v1M829.5 118v2m0 2v1m0 1v19m0 3v1M830.5 122v2m0 1v22m0 1v1M831.5 124v1m0 1v2m0 1v23m0 7v1M832.5 125v1m0 4v1m0 1v20m0 2v2M833.5 117v1m0 1v1m0 3v2m0 1v17m0 1v2m0 2v1m0 1v1M834.5 113v2m0 2v19m0 1v1m0 1v1M835.5 103v1m0 2v20m0 1v1m0 1v4m0 1v2M836.5 116v1m0 1v1m0 1v3m0 1v20m0 3v1M837.5 127v2m0 2v1m0 2v1m0 1v20m0 2v1m0 1v1M838.5 119v1m0 1v2m0 1v2m0 1v16m0 1v3m0 2v2m0 1v1M839.5 104v1m0 1v2m0 1v1m0 1v13m0 1v3m0 1v3m0 2v3m0 1v1m0 1v1M840.5 101v1m0 8v1m0 1v20m0 1v1M841.5 115v1m0 1v1m0 2v13m0 1v10m0 1v1M842.5 125v1m0 1v1m0 1v21m0 1v1m0 1v2m0 1v1M843.5 125v2m0 2v24M844.5 123v1m0 3v11m0 1v6m0 1v1m0 1v3M845.5 114v1m0 6v1m0 1v22m0 7v1M846.5 109v1m0 1v2m0 1v3m0 1v1m0 1v18m0 1v2m0 3v1m0 4v1M847.5 116v22m0 1v1M848.5 121v2m0 1v18m0 3v1m0 4v1M849.5 129v1m0 1v1m0 1v18m0 5v2m0 4v1M850.5 129v1m0 1v2m0 1v23M851.5 116v3m0 1v1m0 2v20m0 1v1m0 1v2m0 1v1M852.5 109v1m0 1v2m0 1v20m0 1v3M853.5 104v2m0 1v1m0 1v2m0 1v20m0 1v1M854.5 112v1m0 5v15m0 1v2m0 1v2m0 1v1M855.5 121v2m0 1v20m0 3v3M856.5 122v1m0 3v1m0 1v3m0 2v19m0 1v2M857.5 116v1m0 3v1m0 3v1m0 1v1m0 1v1m0 1v17m0 1v3m0 7v1M858.5 116v1m0 5v15m0 1v2m0 2v2m0 1v1M859.5 116v14m0 1v7m0 1v1M860.5 107v23m0 3v1m0 1v2m0 3v1M861.5 104v1m0 5v1m0 1v1m0 1v17m0 2v2m0 2v1M862.5 118v1m0 2v1m0 1v2m0 1v20m0 1v1m0 3v1M863.5 124v1m0 5v16m0 1v1m0 2v3m0 3v1M864.5 120v1m0 1v1m0 1v21m0 5v1M865.5 116v25m0 2v1m0 1v1M866.5 110v1m0 2v2m0 1v19m0 2v1m0 2v1M867.5 90v1m0 18v3m0 1v17m0 1v1M868.5 106v1m0 2v2m0 2v21m0 2v1M869.5 113v1m0 3v25M870.5 118v1m0 1v24m0 5v1M871.5 107v1m0 7v2m0 2v1m0 1v2m0 1v18m0 2v2M872.5 110v1m0 1v1m0 5v17m0 2v3M873.5 120v19m0 1v2m0 1v1M874.5 123v4m0 1v1m0 1v10m0 1v6m0 1v1m0 3v1m0 1v1m0 1v1M875.5 134v3m0 1v20m0 1v1m0 1v2M876.5 143v2m0 2v21m0 1v2m0 2v1m0 1v1M877.5 151v1m0 4v1m0 1v18m0 1v1m0 1v3m0 6v1M878.5 151v1m0 2v1m0 4v20m0 1v1m0 1v2m0 3v2m0 2v1M879.5 143v1m0 3v4m0 1v12m0 1v4m0 1v1m0 1v3M880.5 130v1m0 1v1m0 1v21m0 1v3M881.5 113v1m0 3v1m0 1v24m0 1v1m0 1v1M882.5 112v1m0 1v1m0 1v20m0 4v1M883.5 82v1m0 28v1m0 2v23M884.5 113v1m0 2v17m0 1v2m0 1v1m0 1v1M885.5 108v3m0 3v19m0 2v3m0 4v1M886.5 110v1m0 2v21m0 1v1" stroke="#fff" stroke-width="1"/><path d="M8 145h2v78h-2zM14 112h2v71h-2zM21 154h2v65h-2zM34 145h2v70h-2zM41 130h2v78h-2zM47 152h2v56h-2zM54 131h2v80h-2zM60 109h2v74h-2zM74 80h2v91h-2zM80 162h2v59h-2zM87 178h2v71h-2zM93 55h2v73h-2zM100 144h2v75h-2zM106 242h3v84h-3zM113 46h2v76h-2zM120 156h2v80h-2zM126 108h2v77h-2zM133 146h2v73h-2zM146 114h2v76h-2zM152 139h2v80h-2zM166 129h2v77h-2zM172 139h2v68h-2zM179 133h2v70h-2zM185 141h2v76h-2zM192 131h2v72h-2zM198 138h2v78h-2zM205 102h2v77h-2zM212 155h2v72h-2zM218 113h2v64h-2zM225 129h2v80h-2zM231 268h2v64h-2zM238 103h2v69h-2zM244 41h2v76h-2zM251 231h2v63h-2zM258 146h2v63h-2zM264 140h2v62h-2zM271 127h2v68h-2zM277 127h2v72h-2zM284 127h2v68h-2zM291 133h2v84h-2zM297 142h2v79h-2zM304 133h2v66h-2zM310 135h2v68h-2zM317 136h2v69h-2zM323 122h2v69h-2zM330 136h2v69h-2zM337 127h2v68h-2zM343 124h2v71h-2zM350 145h2v74h-2zM356 125h2v78h-2zM376 121h2v74h-2zM383 154h2v75h-2zM389 114h2v84h-2zM396 128h2v72h-2zM402 146h2v78h-2zM409 161h2v75h-2zM415 132h2v72h-2zM422 141h2v74h-2zM429 142h2v62h-2zM435 132h2v73h-2zM442 146h2v73h-2zM448 134h2v78h-2zM455 138h2v66h-2zM461 133h2v69h-2zM468 129h2v74h-2zM475 131h2v79h-2zM481 135h2v54h-2zM488 127h2v73h-2zM494 135h2v81h-2zM501 141h2v80h-2zM508 135h2v71h-2zM514 103h2v87h-2zM521 135h2v75h-2zM527 144h2v88h-2zM534 133h2v83h-2zM540 135h2v67h-2zM547 137h2v81h-2zM554 125h2v69h-2zM560 135h2v76h-2zM573 116h2v86h-2zM580 121h2v77h-2zM586 132h2v75h-2zM593 157h2v67h-2zM606 143h2v70h-2zM613 122h2v82h-2zM619 154h2v72h-2zM632 147h2v67h-2zM639 125h2v67h-2zM646 135h2v68h-2zM652 147h2v65h-2zM659 152h2v64h-2zM665 145h2v69h-2zM672 128h2v75h-2zM679 140h2v67h-2zM685 126h2v77h-2zM692 142h2v59h-2zM698 158h2v58h-2zM711 134h2v55h-2zM718 119h2v72h-2zM725 125h2v70h-2zM731 139h2v66h-2zM738 129h2v76h-2zM744 138h2v75h-2zM751 116h2v79h-2zM757 134h2v78h-2zM764 145h2v76h-2zM771 124h2v70h-2zM784 133h2v62h-2zM797 126h2v69h-2zM803 139h2v80h-2zM810 132h2v72h-2zM823 134h2v85h-2zM830 143h2v72h-2zM836 129h2v68h-2zM843 153h2v72h-2zM849 143h2v70h-2zM856 129h2v64h-2zM863 133h2v70h-2zM869 126h2v63h-2zM876 173h2v63h-2zM882 129h2v74h-2z" fill="#008000"/></svg><div style="left:67px;top:80px;width:15px;height:402px;background-color:#fff;background-image:linear-gradient(45deg,#ececec 25%,transparent 25%,transparent 75%,#ececec 75%),linear-gradient(45deg,#ececec 25%,transparent 25%,transparent 75%,#ececec 75%);background-size:2px 2px;background-position:0 0,1px 1px"></div><div class="sbtn" style="left:67px;top:80px;width:13px;height:15px;"></div><div class="sbtn" style="left:67px;top:225px;width:13px;height:196px;"></div><div class="sbtn" style="left:67px;top:465px;width:13px;height:15px;"></div><svg style="left:67px;top:80px" width="15" height="402" shape-rendering="crispEdges"><path d="M7 6h1v1h1v1h1v1h-5v-1h1v-1h1z" fill="#000"/><path d="M5 391h5v1h-1v1h-1v1h-1v-1h-1v-1h-1z" fill="#000"/></svg><div class="sbtn" style="left:83px;top:483px;width:14px;height:13px;"></div><div class="sbtn" style="left:99px;top:483px;width:858px;height:13px;"></div><div class="sbtn" style="left:959px;top:483px;width:16px;height:13px;"></div><svg style="left:83px;top:483px" width="894" height="15" shape-rendering="crispEdges"><path d="M9 4h1v5h-1v-1h-1v-1h-1v-1h1v-1h1z" fill="#000"/><path d="M885 4h1v1h1v1h1v1h-1v1h-1v1h-1z" fill="#000"/></svg><div class="t" style="left:37.07px;top:77.11px;font-size:10.5px;line-height:10.5px;color:#000;letter-spacing:0.125px;">1.003</div><div class="t" style="left:37.07px;top:122.11px;font-size:10.5px;line-height:10.5px;color:#000;letter-spacing:0.125px;">1.002</div><div class="t" style="left:37.07px;top:167.11px;font-size:10.5px;line-height:10.5px;color:#000;letter-spacing:0.125px;">1.001</div><div class="t" style="left:36.97px;top:212.11px;font-size:10.5px;line-height:10.5px;color:#000;letter-spacing:0.125px;">1.000</div><div class="t" style="left:37.07px;top:257.11px;font-size:10.5px;line-height:10.5px;color:#000;letter-spacing:0.125px;">0.999</div><div class="t" style="left:36.96px;top:302.11px;font-size:10.5px;line-height:10.5px;color:#000;letter-spacing:0.125px;">0.998</div><div class="t" style="left:37.07px;top:347.11px;font-size:10.5px;line-height:10.5px;color:#000;letter-spacing:0.125px;">0.997</div><div class="t" style="left:37.07px;top:392.11px;font-size:10.5px;line-height:10.5px;color:#000;letter-spacing:0.125px;">0.996</div><div class="t" style="left:36.96px;top:437.11px;font-size:10.5px;line-height:10.5px;color:#000;letter-spacing:0.125px;">0.995</div><div class="t" style="left:122.42px;top:501.03px;font-size:10.6px;line-height:10.6px;color:#000;letter-spacing:0.276px;">200</div><div class="t" style="left:122.42px;top:618.03px;font-size:10.6px;line-height:10.6px;color:#000;letter-spacing:0.276px;">200</div><div class="t" style="left:182.47px;top:501.03px;font-size:10.6px;line-height:10.6px;color:#000;letter-spacing:0.276px;">300</div><div class="t" style="left:182.47px;top:618.03px;font-size:10.6px;line-height:10.6px;color:#000;letter-spacing:0.276px;">300</div><div class="t" style="left:243.58px;top:501.03px;font-size:10.6px;line-height:10.6px;color:#000;letter-spacing:0.276px;">400</div><div class="t" style="left:243.58px;top:618.03px;font-size:10.6px;line-height:10.6px;color:#000;letter-spacing:0.276px;">400</div><div class="t" style="left:303.47px;top:501.03px;font-size:10.6px;line-height:10.6px;color:#000;letter-spacing:0.276px;">500</div><div class="t" style="left:303.47px;top:618.03px;font-size:10.6px;line-height:10.6px;color:#000;letter-spacing:0.276px;">500</div><div class="t" style="left:363.42px;top:501.03px;font-size:10.6px;line-height:10.6px;color:#000;letter-spacing:0.276px;">600</div><div class="t" style="left:363.42px;top:618.03px;font-size:10.6px;line-height:10.6px;color:#000;letter-spacing:0.276px;">600</div><div class="t" style="left:423.42px;top:501.03px;font-size:10.6px;line-height:10.6px;color:#000;letter-spacing:0.276px;">700</div><div class="t" style="left:423.42px;top:618.03px;font-size:10.6px;line-height:10.6px;color:#000;letter-spacing:0.276px;">700</div><div class="t" style="left:483.47px;top:501.03px;font-size:10.6px;line-height:10.6px;color:#000;letter-spacing:0.276px;">800</div><div class="t" style="left:483.47px;top:618.03px;font-size:10.6px;line-height:10.6px;color:#000;letter-spacing:0.276px;">800</div><div class="t" style="left:543.47px;top:501.03px;font-size:10.6px;line-height:10.6px;color:#000;letter-spacing:0.276px;">900</div><div class="t" style="left:543.47px;top:618.03px;font-size:10.6px;line-height:10.6px;color:#000;letter-spacing:0.276px;">900</div><div class="t" style="left:601.26px;top:501.03px;font-size:10.6px;line-height:10.6px;color:#000;letter-spacing:0.176px;">1000</div><div class="t" style="left:601.26px;top:618.03px;font-size:10.6px;line-height:10.6px;color:#000;letter-spacing:0.176px;">1000</div><div class="t" style="left:661.68px;top:501.03px;font-size:10.6px;line-height:10.6px;color:#000;letter-spacing:0.176px;">1100</div><div class="t" style="left:661.68px;top:618.03px;font-size:10.6px;line-height:10.6px;color:#000;letter-spacing:0.176px;">1100</div><div class="t" style="left:721.26px;top:501.03px;font-size:10.6px;line-height:10.6px;color:#000;letter-spacing:0.176px;">1200</div><div class="t" style="left:721.26px;top:618.03px;font-size:10.6px;line-height:10.6px;color:#000;letter-spacing:0.176px;">1200</div><div class="t" style="left:781.26px;top:501.03px;font-size:10.6px;line-height:10.6px;color:#000;letter-spacing:0.176px;">1300</div><div class="t" style="left:781.26px;top:618.03px;font-size:10.6px;line-height:10.6px;color:#000;letter-spacing:0.176px;">1300</div><div class="t" style="left:841.26px;top:501.03px;font-size:10.6px;line-height:10.6px;color:#000;letter-spacing:0.176px;">1400</div><div class="t" style="left:841.26px;top:618.03px;font-size:10.6px;line-height:10.6px;color:#000;letter-spacing:0.176px;">1400</div><div class="t" style="left:901.26px;top:501.03px;font-size:10.6px;line-height:10.6px;color:#000;letter-spacing:0.176px;">1500</div><div class="t" style="left:901.26px;top:618.03px;font-size:10.6px;line-height:10.6px;color:#000;letter-spacing:0.176px;">1500</div><div class="t" style="left:961.26px;top:501.03px;font-size:10.6px;line-height:10.6px;color:#000;letter-spacing:0.176px;">1600</div><div class="t" style="left:961.26px;top:618.03px;font-size:10.6px;line-height:10.6px;color:#000;letter-spacing:0.176px;">1600</div><div class="t" style="left:466.37px;top:63.25px;font-size:12.7px;line-height:12.7px;color:#000;letter-spacing:0.121px;">Star 5446285 (Kepler)</div><div class="t" style="left:493.75px;top:522.25px;font-size:12.7px;line-height:12.7px;color:#000;letter-spacing:0.178px;">Time (BKJD)</div><div class="t" style="left:26.70px;top:358.98px;width:0;height:0;"><div style="position:absolute;left:0;top:0;transform:rotate(-90deg);transform-origin:0 0;"><div style="position:absolute;left:0;top:-10.41px;font-size:12.3px;line-height:12.3px;letter-spacing:0.045px;white-space:nowrap">Normalized PDCSAP_FLUX</div></div></div><svg style="left:82px;top:538px" width="896" height="77" shape-rendering="crispEdges"><rect width="896" height="77" fill="#000"/><path d="M50.5 0V77M110.5 0V77M171.5 0V77M231.5 0V77M291.5 0V77M351.5 0V77M411.5 0V77M471.5 0V77M531.5 0V77M591.5 0V77M651.5 0V77M711.5 0V77M771.5 0V77M831.5 0V77M891.5 0V77" stroke="#2a2a2a" stroke-width="1"/><path d="M9.5 40v3M10.5 39v4M11.5 39v4M12.5 40v4M13.5 41v3M14.5 40v4M15.5 39v4M16.5 38v4M17.5 37v4M18.5 39v4M19.5 41v4M20.5 43v4M21.5 45v3M22.5 44v4M23.5 42v5M24.5 41v4M25.5 39v4M26.5 38v4M27.5 39v3M28.5 40v3M29.5 41v4M30.5 40v5M31.5 38v5M32.5 36v5M33.5 35v4M34.5 36v5M35.5 38v5M36.5 39v5M37.5 38v4M38.5 37v3M39.5 36v4M40.5 37v4M41.5 39v4M42.5 40v4M43.5 39v4M44.5 38v4M45.5 37v4M46.5 37v4M47.5 39v3M48.5 40v4M49.5 42v3M50.5 43v3M51.5 42v4M52.5 40v5M53.5 39v4M54.5 38v4M55.5 38v4M56.5 40v4M57.5 41v5M58.5 42v4M59.5 40v4M60.5 37v4M61.5 35v4M62.5 34v4M63.5 35v6M64.5 38v5M65.5 40v4M66.5 41v4M67.5 42v3M68.5 41v4M69.5 42v4M70.5 44v5M71.5 45v5M72.5 41v6M73.5 38v6M74.5 35v6M75.5 34v4M76.5 36v6M77.5 39v5M78.5 42v4M79.5 42v3M80.5 41v4M81.5 40v4M82.5 40v3M83.5 39v5M84.5 42v4M85.5 44v4M86.5 45v3M87.5 44v4M88.5 40v6M89.5 40v5M90.5 37v6M91.5 32v7M92.5 32v4M93.5 31v4M94.5 30v3M95.5 29v4M96.5 29v3M97.5 28v4M98.5 30v3M99.5 30v5M100.5 33v4M101.5 34v4M102.5 36v12M103.5 47v14M104.5 61v10M105.5 68v5M106.5 68v4M107.5 64v5M108.5 52v13M109.5 46v8M110.5 40v8M111.5 37v5M112.5 34v5M113.5 31v6M114.5 30v4M115.5 28v5M116.5 28v4M117.5 28v5M118.5 29v4M119.5 30v4M120.5 31v7M121.5 35v5M122.5 39v4M123.5 41v7M124.5 42v5M125.5 40v5M126.5 38v4M127.5 36v4M128.5 35v3M129.5 35v4M130.5 37v4M131.5 38v4M132.5 38v4M133.5 38v4M134.5 38v5M135.5 40v4M136.5 41v4M137.5 41v5M138.5 41v3M139.5 40v3M140.5 39v3M141.5 39v4M142.5 40v4M143.5 42v4M144.5 43v3M145.5 40v5M146.5 39v4M147.5 37v4M148.5 36v4M149.5 36v4M150.5 38v4M151.5 40v4M152.5 42v4M153.5 42v4M154.5 40v4M155.5 40v4M156.5 42v4M157.5 43v3M158.5 41v4M159.5 40v4M160.5 39v3M161.5 39v4M162.5 40v4M163.5 41v4M164.5 42v4M165.5 41v4M166.5 38v5M167.5 38v3M168.5 39v4M169.5 40v4M170.5 41v4M171.5 41v4M172.5 40v4M173.5 40v3M174.5 39v4M175.5 39v4M176.5 39v4M177.5 40v3M178.5 39v4M179.5 38v5M180.5 39v4M181.5 39v5M182.5 39v5M183.5 40v5M184.5 40v5M185.5 39v5M186.5 39v5M187.5 39v4M188.5 40v4M189.5 41v3M190.5 42v3M191.5 43v3M192.5 41v4M193.5 39v5M194.5 39v4M195.5 41v4M196.5 43v4M197.5 45v4M198.5 46v3M199.5 43v5M200.5 40v5M201.5 39v4M202.5 38v4M203.5 38v4M204.5 38v4M205.5 38v4M206.5 38v4M207.5 38v4M208.5 37v4M209.5 36v4M210.5 35v4M211.5 35v5M212.5 38v4M213.5 40v4M214.5 42v3M215.5 42v3M216.5 42v3M217.5 41v4M218.5 40v4M219.5 40v3M220.5 39v4M221.5 38v4M222.5 37v4M223.5 37v4M224.5 38v5M225.5 40v5M226.5 41v4M227.5 41v4M228.5 41v6M229.5 43v7M230.5 48v8M231.5 53v5M232.5 54v5M233.5 54v5M234.5 52v6M235.5 49v7M236.5 45v7M237.5 41v7M238.5 38v5M239.5 35v6M240.5 32v4M241.5 31v4M242.5 30v3M243.5 28v4M244.5 27v3M245.5 26v5M246.5 29v4M247.5 32v6M248.5 37v7M249.5 42v6M250.5 46v6M251.5 49v4M252.5 49v7M253.5 45v8M254.5 41v6M255.5 40v3M256.5 40v4M257.5 41v3M258.5 40v4M259.5 40v3M260.5 39v4M261.5 39v3M262.5 39v4M263.5 40v4M264.5 40v4M265.5 39v4M266.5 39v4M267.5 38v5M268.5 39v4M269.5 40v4M270.5 41v4M271.5 41v4M272.5 40v4M273.5 39v4M274.5 38v5M275.5 38v5M276.5 39v4M277.5 40v4M278.5 41v4M279.5 40v5M280.5 40v4M281.5 39v4M282.5 39v4M283.5 40v4M284.5 40v4M285.5 40v4M286.5 41v4M287.5 36v1m0 3v4M288.5 39v4M289.5 38v5M290.5 40v5M291.5 41v4M292.5 40v5M293.5 40v4M294.5 40v3M295.5 39v4M296.5 36v1m0 2v5M297.5 40v4M298.5 41v3M299.5 39v5M300.5 39v5M301.5 36v1m0 2v4M302.5 40v5M303.5 41v5M304.5 41v4M305.5 40v4M306.5 39v4M307.5 38v4M308.5 39v4M309.5 40v5M310.5 41v4M311.5 40v4M312.5 39v4M313.5 39v3M314.5 39v4M315.5 40v4M316.5 40v5M317.5 40v5M318.5 40v4M319.5 39v4M320.5 39v4M321.5 41v4M322.5 41v4M323.5 41v3M324.5 39v4M325.5 37v5M326.5 39v4M327.5 39v4M328.5 40v4M329.5 41v4M330.5 40v5M331.5 40v4M332.5 39v4M333.5 39v4M334.5 40v4M335.5 40v4M336.5 41v4M337.5 42v3M338.5 41v4M339.5 39v5M340.5 39v4M341.5 39v5M342.5 40v4M343.5 41v3M344.5 41v5M345.5 41v4M346.5 40v5M347.5 40v4M348.5 39v4M349.5 38v5M350.5 39v4M351.5 40v4M352.5 41v3M353.5 40v5M354.5 40v4M355.5 39v4M356.5 39v3M357.5 40v3M358.5 40v4M359.5 41v4M360.5 39v5M361.5 39v5M362.5 39v3M372.5 42v4M373.5 41v4M374.5 40v4M375.5 39v4M376.5 39v3M377.5 39v5M378.5 40v4M379.5 41v5M380.5 41v4M381.5 40v4M382.5 39v4M383.5 39v5M384.5 41v5M385.5 41v5M386.5 40v5M387.5 39v4M388.5 38v4M389.5 39v4M390.5 40v4M391.5 41v4M392.5 42v3M393.5 40v5M394.5 38v5M395.5 37v5M396.5 37v5M397.5 39v4M398.5 40v4M399.5 40v5M400.5 39v4M401.5 37v5M402.5 38v4M403.5 40v4M404.5 41v4M405.5 40v5M406.5 39v5M407.5 38v5M408.5 38v4M409.5 38v5M410.5 39v5M411.5 40v4M412.5 41v4M413.5 40v4M414.5 39v4M415.5 38v4M416.5 40v4M417.5 41v4M418.5 41v4M419.5 40v4M420.5 39v4M421.5 38v5M422.5 39v5M423.5 40v4M424.5 41v4M425.5 40v5M426.5 39v4M427.5 39v4M428.5 39v4M429.5 38v5M430.5 39v5M431.5 40v4M432.5 40v4M433.5 39v4M434.5 39v4M435.5 38v4M436.5 33v1m0 5v4M437.5 40v4M438.5 40v5M439.5 41v4M440.5 40v4M441.5 39v4M442.5 39v4M443.5 40v4M444.5 41v3M445.5 41v4M446.5 40v5M447.5 40v4M448.5 40v3M449.5 39v4M450.5 39v5M451.5 40v4M452.5 41v5M453.5 42v4M454.5 41v4M455.5 39v5M456.5 39v4M457.5 38v4M458.5 37v5M459.5 39v5M460.5 41v4M461.5 41v4M462.5 40v4M463.5 39v4M464.5 37v5M465.5 39v5M466.5 41v4M467.5 42v3M468.5 40v5M469.5 39v5M470.5 39v4M471.5 38v4M472.5 38v5M473.5 39v4M474.5 40v4M475.5 41v5M476.5 41v4M477.5 41v3M478.5 36v1m0 3v4M479.5 39v4M480.5 40v3M481.5 40v3M482.5 41v4M483.5 41v4M484.5 39v5M485.5 38v5M486.5 39v3M487.5 39v4M488.5 28v1m0 7v1m0 3v4M489.5 41v4M490.5 41v4M491.5 40v5M492.5 40v4M493.5 39v4M494.5 39v4M495.5 39v4M496.5 40v4M497.5 41v4M498.5 40v4M499.5 39v4M500.5 40v4M501.5 40v5M502.5 42v4M503.5 41v4M504.5 39v5M505.5 39v4M506.5 38v4M507.5 27v1m0 10v5M508.5 40v3M509.5 41v4M510.5 40v4M511.5 38v5M512.5 38v4M513.5 38v5M514.5 40v4M515.5 40v5M516.5 41v4M517.5 40v5M518.5 40v4M519.5 39v4M520.5 39v4M521.5 39v5M522.5 41v4M523.5 41v4M524.5 40v4M525.5 39v4M526.5 38v4M527.5 38v5M528.5 37v1m0 1v4M529.5 40v4M530.5 41v4M531.5 40v4M532.5 39v5M533.5 40v4M534.5 41v4M535.5 42v3M536.5 41v4M537.5 40v4M538.5 40v4M539.5 39v4M540.5 39v5M541.5 40v4M542.5 41v5M543.5 41v4M544.5 40v5M545.5 39v4M546.5 38v4M547.5 38v4M548.5 39v4M549.5 39v4M550.5 40v4M551.5 41v3M552.5 38v5M553.5 38v4M554.5 39v4M555.5 40v5M556.5 41v4M557.5 41v3M558.5 37v1m0 1v5M559.5 39v4M560.5 39v3M561.5 40v4M562.5 40v5M563.5 41v4M564.5 40v4M565.5 40v3M566.5 39v4M567.5 38v4M568.5 38v4M569.5 39v5M570.5 36v1m0 3v4M571.5 40v4M572.5 40v3M573.5 38v5M574.5 38v5M575.5 36v1m0 3v3M576.5 40v4M577.5 41v4M578.5 41v5M579.5 40v4M580.5 39v4M581.5 37v5M582.5 38v5M583.5 39v4M584.5 40v4M585.5 41v4M586.5 40v5M587.5 40v4M588.5 39v4M589.5 39v3M590.5 37v1m0 1v4M591.5 40v5M592.5 41v4M593.5 40v4M594.5 39v4M595.5 40v4M596.5 41v4M597.5 41v4M598.5 39v5M599.5 38v4M600.5 38v4M601.5 39v4M602.5 40v4M603.5 40v5M604.5 41v4M605.5 40v4M606.5 40v3M607.5 39v3M608.5 38v4M609.5 38v4M610.5 31v1m0 8v4M611.5 40v5M612.5 40v4M613.5 40v4M614.5 39v4M615.5 38v5M616.5 38v4M617.5 39v4M618.5 40v4M619.5 41v5M620.5 42v4M621.5 41v5M622.5 40v5M623.5 40v4M624.5 39v4M625.5 39v4M626.5 40v3M627.5 40v4M628.5 41v4M629.5 40v4M630.5 39v5M631.5 38v4M632.5 38v4M633.5 40v4M634.5 40v4M635.5 40v4M636.5 39v4M637.5 38v4M638.5 31v1m0 6v4M639.5 34v1m0 4v4M640.5 40v4M641.5 40v5M642.5 40v5M643.5 40v4M644.5 39v4M645.5 39v4M646.5 39v5M647.5 40v4M648.5 40v5M649.5 41v5M650.5 41v4M651.5 40v4M652.5 40v4M653.5 39v4M654.5 39v5M655.5 40v4M656.5 40v5M657.5 41v4M658.5 41v4M659.5 40v4M660.5 39v5M661.5 39v4M662.5 39v4M663.5 40v5M664.5 41v4M665.5 40v4M666.5 39v4M667.5 39v4M668.5 40v4M669.5 40v5M670.5 40v4M671.5 40v5M672.5 39v4M673.5 39v4M674.5 40v4M675.5 40v4M676.5 41v4M677.5 40v4M678.5 38v1m0 1v4M679.5 39v4M680.5 39v4M681.5 40v3M682.5 40v5M683.5 41v4M684.5 41v4M685.5 40v4M686.5 39v4M687.5 39v5M688.5 40v5M689.5 42v3M690.5 40v4M691.5 39v5M692.5 39v4M693.5 40v5M694.5 42v3M695.5 41v5M696.5 39v5M697.5 38v4M698.5 39v3M699.5 39v4M700.5 40v4M701.5 41v3M702.5 40v4M703.5 39v3M704.5 38v5M705.5 40v3M709.5 40v4M710.5 39v4M711.5 40v4M712.5 41v5M713.5 41v5M714.5 41v4M715.5 40v4M716.5 39v4M717.5 39v4M718.5 39v5M719.5 40v5M720.5 41v4M721.5 41v5M722.5 41v3M723.5 40v4M724.5 40v4M725.5 39v4M726.5 40v4M727.5 40v4M728.5 41v4M729.5 41v4M730.5 40v4M731.5 39v4M732.5 38v4M733.5 39v4M734.5 40v4M735.5 41v4M736.5 40v4M737.5 39v4M738.5 39v4M739.5 38v4M740.5 39v4M741.5 40v4M742.5 41v4M743.5 40v4M744.5 39v4M745.5 39v4M746.5 41v4M747.5 41v5M748.5 37v1m0 2v5M749.5 39v4M750.5 39v4M751.5 39v4M752.5 39v4M753.5 40v4M754.5 41v4M755.5 41v4M756.5 40v5M757.5 40v4M758.5 40v4M759.5 39v4M760.5 40v3M761.5 40v4M762.5 41v4M763.5 41v4M764.5 41v3M765.5 40v4M766.5 39v4M767.5 39v3M768.5 39v4M769.5 40v3M770.5 40v4M771.5 40v4M772.5 40v4M773.5 38v5M774.5 38v4M775.5 38v4M776.5 39v4M777.5 39v4M778.5 38v1m0 1v4M779.5 41v4M780.5 40v4M781.5 40v3M782.5 39v3M783.5 38v4M784.5 39v4M785.5 40v4M786.5 40v4M787.5 40v4M788.5 40v4M789.5 39v5M790.5 39v4M791.5 39v4M792.5 39v5M793.5 40v4M794.5 40v5M795.5 42v4M796.5 41v5M797.5 32v1m0 8v4M798.5 40v4M799.5 39v4M800.5 39v4M801.5 39v4M802.5 41v4M803.5 40v4M804.5 39v4M805.5 38v5M806.5 38v4M807.5 39v4M808.5 40v4M809.5 41v4M810.5 40v4M811.5 39v5M812.5 38v4M813.5 39v4M814.5 39v4M815.5 40v4M816.5 40v4M817.5 41v3M824.5 41v3M825.5 40v4M826.5 40v4M827.5 40v3M828.5 39v5M829.5 39v4M830.5 39v4M831.5 40v4M832.5 40v4M833.5 41v4M834.5 39v5M835.5 39v4M836.5 38v4M837.5 39v4M838.5 40v5M839.5 40v4M840.5 37v6M841.5 38v4M842.5 39v5M843.5 40v5M844.5 40v4M845.5 40v4M846.5 39v4M847.5 38v5M848.5 39v4M849.5 40v3M850.5 41v4M851.5 41v4M852.5 39v5M853.5 38v5M854.5 37v5M855.5 39v4M856.5 40v4M857.5 40v5M858.5 39v5M859.5 40v3M860.5 39v4M861.5 38v4M862.5 38v4M863.5 39v5M864.5 41v4M865.5 39v4M866.5 39v4M867.5 39v4M868.5 35v1m0 2v4M869.5 38v4M870.5 39v4M871.5 39v4M872.5 39v4M873.5 38v5M874.5 40v3M875.5 40v5M876.5 41v5M877.5 42v5M878.5 44v4M879.5 43v6M880.5 43v4M881.5 41v4M882.5 39v4M883.5 39v3M884.5 34v1m0 4v3M885.5 39v4M886.5 38v5M887.5 39v3" stroke="#fff" stroke-width="1"/><path d="M9 42h2v11h-2zM15 38h2v10h-2zM22 43h2v10h-2zM35 42h2v10h-2zM42 40h2v11h-2zM48 43h2v8h-2zM55 41h2v11h-2zM61 38h2v10h-2zM75 34h2v13h-2zM81 44h2v9h-2zM88 46h2v10h-2zM94 31h2v10h-2zM101 42h2v11h-2zM107 54h3v12h-3zM114 30h2v10h-2zM121 44h2v11h-2zM127 38h2v10h-2zM134 42h2v11h-2zM147 38h2v11h-2zM153 42h2v11h-2zM167 40h2v11h-2zM173 42h2v9h-2zM180 41h2v10h-2zM186 42h2v10h-2zM193 41h2v10h-2zM199 41h2v11h-2zM206 37h2v11h-2zM213 44h2v10h-2zM219 38h2v9h-2zM226 40h2v11h-2zM232 58h2v9h-2zM239 37h2v10h-2zM245 29h2v11h-2zM252 53h2v9h-2zM259 42h2v9h-2zM265 42h2v8h-2zM272 40h2v10h-2zM278 40h2v10h-2zM285 40h2v10h-2zM292 41h2v11h-2zM298 42h2v11h-2zM305 41h2v9h-2zM311 41h2v10h-2zM318 41h2v10h-2zM324 39h2v10h-2zM331 41h2v10h-2zM338 40h2v10h-2zM344 40h2v9h-2zM351 42h2v11h-2zM357 40h2v11h-2zM377 39h2v11h-2zM384 43h2v11h-2zM390 38h2v12h-2zM397 40h2v10h-2zM403 42h2v11h-2zM410 44h2v11h-2zM416 41h2v10h-2zM423 42h2v10h-2zM430 42h2v9h-2zM436 41h2v10h-2zM443 42h2v11h-2zM449 41h2v11h-2zM456 41h2v10h-2zM462 41h2v9h-2zM469 40h2v11h-2zM476 40h2v11h-2zM482 41h2v8h-2zM489 40h2v10h-2zM495 41h2v11h-2zM502 42h2v11h-2zM509 41h2v10h-2zM515 37h2v12h-2zM522 41h2v10h-2zM528 42h2v12h-2zM535 41h2v11h-2zM541 41h2v9h-2zM548 41h2v11h-2zM555 40h2v9h-2zM561 41h2v11h-2zM574 39h2v11h-2zM581 39h2v11h-2zM587 41h2v10h-2zM594 44h2v9h-2zM607 42h2v10h-2zM614 39h2v12h-2zM620 43h2v10h-2zM633 43h2v9h-2zM640 40h2v9h-2zM647 41h2v10h-2zM653 43h2v9h-2zM660 43h2v9h-2zM666 42h2v10h-2zM673 40h2v11h-2zM680 42h2v9h-2zM686 40h2v11h-2zM693 42h2v8h-2zM699 44h2v8h-2zM712 41h2v8h-2zM719 39h2v10h-2zM726 40h2v10h-2zM732 42h2v9h-2zM739 40h2v11h-2zM745 41h2v11h-2zM752 39h2v11h-2zM758 41h2v11h-2zM765 42h2v11h-2zM772 40h2v9h-2zM785 41h2v9h-2zM798 40h2v10h-2zM804 42h2v11h-2zM811 41h2v10h-2zM824 41h2v12h-2zM831 42h2v10h-2zM837 40h2v10h-2zM844 43h2v10h-2zM850 42h2v10h-2zM857 40h2v9h-2zM864 41h2v10h-2zM870 40h2v9h-2zM877 46h2v9h-2zM883 40h2v11h-2z" fill="#008000"/><rect x="1.5" y="24.5" width="893" height="48" fill="none" stroke="#ffff00" stroke-width="1"/></svg><div class="pnl" style="left:23px;top:658px;width:180px;height:91px;"></div><div class="grp" style="left:35px;top:676px;width:156px;height:59px;"></div><div style="left:41px;top:675px;width:107px;height:3px;background:#f0f0f0"></div><div class="t" style="left:42.32px;top:671.69px;font-size:11px;line-height:11px;color:#000;letter-spacing:-0.218px;">Load Work Group File</div><div class="grp" style="left:95px;top:688px;width:96px;height:37px;"></div><div class="btn" style="left:42px;top:696px;width:39px;height:21px;"></div><div class="t" style="left:47.15px;top:701.69px;font-size:11px;line-height:11px;color:#8d8d8d;letter-spacing:-0.157px;">Setup</div><div class="btn" style="left:102px;top:696px;width:37px;height:21px;"></div><div class="t" style="left:108.82px;top:701.69px;font-size:11px;line-height:11px;color:#8d8d8d;letter-spacing:-0.093px;">Prev</div><div class="btnd" style="left:149px;top:696px;width:37px;height:21px;"></div><div class="t" style="left:155.72px;top:701.69px;font-size:11px;line-height:11px;color:#8d8d8d;letter-spacing:0.210px;">Next</div><div class="pnl" style="left:215px;top:658px;width:366px;height:91px;"></div><div class="grp" style="left:227px;top:678px;width:343px;height:61px;"></div><div style="left:233px;top:677px;width:68px;height:3px;background:#f0f0f0"></div><div class="t" style="left:234.42px;top:673.69px;font-size:11px;line-height:11px;color:#000;letter-spacing:-0.185px;">Locate Signal</div><div style="left:474px;top:679px;width:1px;height:61px;background:#a0a0a0"></div><div style="left:475px;top:679px;width:1px;height:61px;background:#fff"></div><div class="t" style="left:256.15px;top:697.69px;font-size:11px;line-height:11px;color:#000;letter-spacing:-0.050px;">Signal Type:</div><div class="t" style="left:365.90px;top:697.69px;font-size:11px;line-height:11px;color:#000;letter-spacing:-0.040px;">Assoc Object:</div><div class="t" style="left:501.22px;top:697.69px;font-size:11px;line-height:11px;color:#000;letter-spacing:0.232px;">Locate:</div><div style="left:234px;top:713px;width:110px;height:18px;background:#f0f0f0;border:1px solid;border-color:#a0a0a0 #fff #fff #a0a0a0;box-shadow:inset 1px 1px #696969,inset -1px -1px #e3e3e3"></div><div class="btn" style="left:328px;top:715px;width:14px;height:14px;"></div><svg style="left:328px;top:715px" width="16" height="16" shape-rendering="crispEdges"><path d="M4 6h7v1h-1v1h-1v1h-1v1h-1v-1h-1v-1h-1v-1h-1z" fill="#a0a0a0"/></svg><div style="left:356px;top:713px;width:111px;height:18px;background:#f0f0f0;border:1px solid;border-color:#a0a0a0 #fff #fff #a0a0a0;box-shadow:inset 1px 1px #696969,inset -1px -1px #e3e3e3"></div><div class="btn" style="left:451px;top:715px;width:14px;height:14px;"></div><svg style="left:451px;top:715px" width="16" height="16" shape-rendering="crispEdges"><path d="M4 6h7v1h-1v1h-1v1h-1v1h-1v-1h-1v-1h-1v-1h-1z" fill="#a0a0a0"/></svg><div class="btn" style="left:482px;top:714px;width:37px;height:18px;"></div><div class="t" style="left:488.32px;top:718.69px;font-size:11px;line-height:11px;color:#8d8d8d;letter-spacing:0.007px;">Prev</div><div class="btn" style="left:527px;top:714px;width:37px;height:18px;"></div><div class="t" style="left:533.42px;top:718.69px;font-size:11px;line-height:11px;color:#8d8d8d;letter-spacing:0.310px;">Next</div><div class="pnl" style="left:593px;top:658px;width:168px;height:91px;"></div><div class="grp" style="left:605px;top:676px;width:144px;height:63px;"></div><div style="left:612px;top:675px;width:55px;height:3px;background:#f0f0f0"></div><div class="t" style="left:613.57px;top:671.69px;font-size:11px;line-height:11px;color:#000;letter-spacing:-0.545px;">Zoom View</div><div style="left:698px;top:677px;width:1px;height:63px;background:#a0a0a0"></div><div style="left:699px;top:677px;width:1px;height:63px;background:#fff"></div><div class="grp" style="left:611px;top:694px;width:39px;height:45px;"></div><div style="left:618px;top:693px;width:28px;height:3px;background:#f0f0f0"></div><div class="t" style="left:619.80px;top:689.69px;font-size:11px;line-height:11px;color:#000;letter-spacing:0.233px;">Vert.</div><div class="grp" style="left:653px;top:694px;width:38px;height:45px;"></div><div style="left:659px;top:693px;width:30px;height:3px;background:#f0f0f0"></div><div class="t" style="left:660.52px;top:689.69px;font-size:11px;line-height:11px;color:#000;letter-spacing:0.220px;">Horz.</div><div style="left:606px;top:739px;width:144px;height:1px;background:#a0a0a0"></div><div style="left:606px;top:740px;width:145px;height:1px;background:#fff"></div><div style="left:606px;top:741px;width:145px;height:2px;background:#f0f0f0"></div><div class="btn" style="left:623px;top:703px;width:15px;height:16px;"></div><div class="btn" style="left:623px;top:721px;width:15px;height:16px;"></div><div class="btn" style="left:656px;top:705px;width:16px;height:24px;"></div><div class="btn" style="left:674px;top:705px;width:16px;height:24px;"></div><svg style="left:593px;top:658px" width="170" height="93" shape-rendering="crispEdges"><path d="M37 51h1v1h1v1h1v1h1v1h-7v-1h1v-1h1v-1h1z" fill="#000"/><path d="M34 70h7v1h-1v1h-1v1h-1v1h-1v-1h-1v-1h-1v-1h-1z" fill="#000"/><path d="M72 56h1v7h-1v-1h-1v-1h-1v-1h-1v-1h1v-1h1v-1h1z" fill="#000"/><path d="M89 56h1v1h1v1h1v1h1v1h-1v1h-1v1h-1v1h-1z" fill="#000"/></svg><div class="btn" style="left:704px;top:700px;width:39px;height:19px;"></div><div class="t" style="left:708.62px;top:704.69px;font-size:11px;line-height:11px;color:#8d8d8d;letter-spacing:-0.080px;">Reset</div><div class="pnl" style="left:773px;top:658px;width:215px;height:91px;"></div><div class="grp" style="left:785px;top:676px;width:191px;height:63px;"></div><div style="left:792px;top:675px;width:95px;height:3px;background:#f0f0f0"></div><div class="t" style="left:792.95px;top:671.69px;font-size:11px;line-height:11px;color:#000;letter-spacing:-0.153px;">Save/Restore View</div><div style="left:786px;top:689px;width:191px;height:1px;background:#a0a0a0"></div><div style="left:786px;top:690px;width:191px;height:1px;background:#fff"></div><div style="left:851px;top:690px;width:1px;height:50px;background:#a0a0a0"></div><div style="left:852px;top:690px;width:1px;height:50px;background:#fff"></div><div class="t" style="left:793.80px;top:696.69px;font-size:11px;line-height:11px;color:#000;letter-spacing:0.084px;">AutoSave:</div><div class="t" style="left:895.82px;top:696.69px;font-size:11px;line-height:11px;color:#000;letter-spacing:-0.015px;">Manual:</div><div class="btnd" style="left:794px;top:713px;width:51px;height:19px;"></div><div class="t" style="left:799.92px;top:716.69px;font-size:11px;line-height:11px;color:#8d8d8d;letter-spacing:0.070px;">Restore</div><div class="btn" style="left:858px;top:713px;width:52px;height:19px;"></div><div class="t" style="left:870.85px;top:716.69px;font-size:11px;line-height:11px;color:#000;letter-spacing:-0.093px;">Save</div><div class="btn" style="left:918px;top:713px;width:51px;height:19px;"></div><div class="t" style="left:923.52px;top:716.69px;font-size:11px;line-height:11px;color:#8d8d8d;letter-spacing:0.070px;">Restore</div><div style="left:600px;top:770px;width:411px;height:22px;background:linear-gradient(#e8e8e8,#fff)"></div><div style="left:601px;top:770px;width:14px;height:596px;background:linear-gradient(90deg,#d0d0d0,#fff)"></div><div style="left:0px;top:770px;width:601px;height:596px;background:#f0f0f0"></div><div style="left:0px;top:770px;width:601px;height:31px;background:#fff"></div><div style="left:0px;top:770px;width:1px;height:596px;background:#a0a0a0"></div><div style="left:600px;top:770px;width:1px;height:594px;background:#8c8c8c"></div><div style="left:0px;top:1363px;width:601px;height:1px;background:#8c8c8c"></div><div style="left:0px;top:1364px;width:611px;height:2px;background:linear-gradient(#d8d8d8,#fff)"></div><div class="t" style="left:8.54px;top:779.84px;font-size:12px;line-height:12px;color:#999;letter-spacing:-0.235px;">Find Signals</div><div class="grp" style="left:12px;top:818px;width:575px;height:469px;"></div><div style="left:18px;top:817px;width:71px;height:3px;background:#f0f0f0"></div><div class="t" style="left:19.85px;top:813.69px;font-size:11px;line-height:11px;color:#000;letter-spacing:-0.290px;">Signals Found</div><div class="t" style="left:28.95px;top:830.69px;font-size:11px;line-height:11px;color:#000;letter-spacing:-0.334px;">Signal</div><div class="t" style="left:71.52px;top:830.69px;font-size:11px;line-height:11px;color:#000;letter-spacing:-0.223px;">Epoch</div><div class="t" style="left:127.52px;top:830.69px;font-size:11px;line-height:11px;color:#000;letter-spacing:0.067px;">Duration</div><div class="t" style="left:180.32px;top:830.69px;font-size:11px;line-height:11px;color:#000;letter-spacing:-0.088px;">Period</div><div class="t" style="left:219.91px;top:830.69px;font-size:11px;line-height:11px;color:#000;letter-spacing:0.092px;">Instances</div><div class="t" style="left:276.08px;top:830.69px;font-size:11px;line-height:11px;color:#000;letter-spacing:-0.638px;">TTV Mag</div><div class="t" style="left:326.15px;top:830.69px;font-size:11px;line-height:11px;color:#000;letter-spacing:-1.410px;">SNR</div><div class="t" style="left:363.42px;top:830.69px;font-size:11px;line-height:11px;color:#000;letter-spacing:-0.083px;">REarths</div><div class="t" style="left:417.18px;top:830.69px;font-size:11px;line-height:11px;color:#000;letter-spacing:0.200px;">Type</div><div class="t" style="left:461.42px;top:830.69px;font-size:11px;line-height:11px;color:#000;letter-spacing:-0.124px;">Disposition</div><div style="left:25px;top:845px;width:552px;height:158px;background:#fff;box-shadow:inset 1px 1px #a0a0a0,inset 2px 2px #696969,inset -1px -1px #fff,inset -2px -2px #e3e3e3"></div><div style="left:27px;top:847px;width:548px;height:13px;background:#0078d7"></div><div class="t" style="left:38.03px;top:848.69px;font-size:11px;line-height:11px;color:#fff;letter-spacing:0.000px;">1</div><div class="t" style="left:66.13px;top:848.69px;font-size:11px;line-height:11px;color:#fff;letter-spacing:0.063px;">133.004</div><div class="t" style="left:132.58px;top:848.69px;font-size:11px;line-height:11px;color:#fff;letter-spacing:0.235px;">4.414</div><div class="t" style="left:177.53px;top:848.69px;font-size:11px;line-height:11px;color:#fff;letter-spacing:0.252px;">10.947</div><div class="t" style="left:234.93px;top:848.69px;font-size:11px;line-height:11px;color:#fff;letter-spacing:-0.125px;">121</div><div class="t" style="left:279.65px;top:848.69px;font-size:11px;line-height:11px;color:#fff;letter-spacing:0.997px;">7.4*</div><div class="t" style="left:328.08px;top:848.69px;font-size:11px;line-height:11px;color:#fff;letter-spacing:0.173px;">40.6</div><div class="t" style="left:371.98px;top:848.69px;font-size:11px;line-height:11px;color:#fff;letter-spacing:1.140px;">4.1</div><div class="t" style="left:416.52px;top:848.69px;font-size:11px;line-height:11px;color:#fff;letter-spacing:-1.370px;">PC</div><div class="t" style="left:464.42px;top:848.69px;font-size:11px;line-height:11px;color:#fff;letter-spacing:-0.120px;">Pending</div><div style="left:57px;top:849px;width:1px;height:10px;background:#fff"></div><div style="left:124px;top:849px;width:1px;height:10px;background:#fff"></div><div style="left:172px;top:849px;width:1px;height:10px;background:#fff"></div><div style="left:220px;top:849px;width:1px;height:10px;background:#fff"></div><div style="left:272px;top:849px;width:1px;height:10px;background:#fff"></div><div style="left:322px;top:849px;width:1px;height:10px;background:#fff"></div><div style="left:365px;top:849px;width:1px;height:10px;background:#fff"></div><div style="left:412px;top:849px;width:1px;height:10px;background:#fff"></div><div style="left:460px;top:849px;width:1px;height:10px;background:#fff"></div><div style="left:217px;top:821px;width:103px;height:37px;border:3px solid #00a2e8;"></div><div style="left:22px;top:1012px;width:555px;height:90px;border:3px solid #00a2e8;"></div><div class="grp" style="left:27px;top:1023px;width:549px;height:79px;"></div><div style="left:33px;top:1022px;width:93px;height:3px;background:#f0f0f0"></div><div class="t" style="left:34.52px;top:1018.69px;font-size:11px;line-height:11px;color:#000;letter-spacing:-0.022px;">Navigation Control</div><div class="t" style="left:58.72px;top:1046.69px;font-size:11px;line-height:11px;color:#000;letter-spacing:-0.060px;">Periodic Instances:</div><div class="t" style="left:81.15px;top:1072.69px;font-size:11px;line-height:11px;color:#000;letter-spacing:-0.142px;">Single Events:</div><div class="btn" style="left:156px;top:1038px;width:49px;height:21px;"></div><div class="t" style="left:170.72px;top:1043.69px;font-size:11px;line-height:11px;color:#8d8d8d;letter-spacing:-0.165px;">First</div><div class="btn" style="left:156px;top:1064px;width:49px;height:21px;"></div><div class="t" style="left:170.72px;top:1069.69px;font-size:11px;line-height:11px;color:#8d8d8d;letter-spacing:-0.165px;">First</div><div class="btn" style="left:213px;top:1038px;width:49px;height:21px;"></div><div class="t" style="left:226.98px;top:1043.69px;font-size:11px;line-height:11px;color:#8d8d8d;letter-spacing:-0.165px;">Prev</div><div class="btn" style="left:213px;top:1064px;width:49px;height:21px;"></div><div class="t" style="left:226.98px;top:1069.69px;font-size:11px;line-height:11px;color:#8d8d8d;letter-spacing:-0.165px;">Prev</div><div class="btn" style="left:267px;top:1038px;width:49px;height:21px;"></div><div class="t" style="left:281.03px;top:1043.69px;font-size:11px;line-height:11px;color:#000;letter-spacing:-0.165px;">Next</div><div class="btn" style="left:267px;top:1064px;width:49px;height:21px;"></div><div class="t" style="left:281.03px;top:1069.69px;font-size:11px;line-height:11px;color:#8d8d8d;letter-spacing:-0.165px;">Next</div><div class="btn" style="left:324px;top:1038px;width:49px;height:21px;"></div><div class="t" style="left:338.97px;top:1043.69px;font-size:11px;line-height:11px;color:#000;letter-spacing:-0.165px;">Last</div><div class="btn" style="left:324px;top:1064px;width:49px;height:21px;"></div><div class="t" style="left:338.97px;top:1069.69px;font-size:11px;line-height:11px;color:#8d8d8d;letter-spacing:-0.165px;">Last</div><div style="left:22px;top:1112px;width:555px;height:63px;border:3px solid #00a2e8;"></div><div class="grp" style="left:27px;top:1122px;width:548px;height:49px;"></div><div style="left:33px;top:1121px;width:59px;height:3px;background:#f0f0f0"></div><div class="t" style="left:35.18px;top:1117.69px;font-size:11px;line-height:11px;color:#000;letter-spacing:-0.543px;">TTV Display</div><div class="t" style="left:41.32px;top:1142.69px;font-size:11px;line-height:11px;color:#000;letter-spacing:-0.026px;">Draw Rectangles Around:</div><svg style="left:170px;top:1128px" width="30" height="40"><circle cx="14.5" cy="11.7" r="5.8" fill="#fff"/><path d="M10.54 15.66A5.6 5.6 0 0 1 18.46 7.74" stroke="#696969" stroke-width="1.1" fill="none"/><circle cx="14.5" cy="11.7" r="2.1" fill="#000"/><circle cx="14.5" cy="28.8" r="5.8" fill="#fff"/><path d="M10.54 32.76A5.6 5.6 0 0 1 18.46 24.84" stroke="#696969" stroke-width="1.1" fill="none"/></svg><div class="t" style="left:195.16px;top:1135.69px;font-size:11px;line-height:11px;color:#000;letter-spacing:-0.036px;">Observed Instances</div><div class="t" style="left:195.05px;top:1152.69px;font-size:11px;line-height:11px;color:#000;letter-spacing:-0.095px;">Calculated Instances</div><div class="btn" style="left:340px;top:1137px;width:112px;height:21px;"></div><div class="t" style="left:350.75px;top:1142.69px;font-size:11px;line-height:11px;color:#000;letter-spacing:-0.379px;">Show TTV Diagram</div><div class="grp" style="left:27px;top:1191px;width:549px;height:79px;"></div><div style="left:34px;top:1190px;width:88px;height:3px;background:#f0f0f0"></div><div class="t" style="left:35.05px;top:1186.69px;font-size:11px;line-height:11px;color:#000;letter-spacing:-0.217px;">Signal Operations</div><div class="btn" style="left:78px;top:1206px;width:85px;height:24px;"></div><div class="t" style="left:87.52px;top:1213.69px;font-size:11px;line-height:11px;color:#000;letter-spacing:0.048px;">Phase Fold...</div><div class="btn" style="left:170px;top:1206px;width:83px;height:24px;"></div><div class="t" style="left:187.95px;top:1213.69px;font-size:11px;line-height:11px;color:#000;letter-spacing:0.425px;">Create...</div><div class="btn" style="left:259px;top:1206px;width:84px;height:24px;"></div><div class="t" style="left:278.42px;top:1213.69px;font-size:11px;line-height:11px;color:#000;letter-spacing:0.355px;">Delete...</div><div class="btn" style="left:349px;top:1206px;width:84px;height:24px;"></div><div class="t" style="left:361.32px;top:1213.69px;font-size:11px;line-height:11px;color:#000;letter-spacing:0.234px;">Delete All...</div><div class="btn" style="left:438px;top:1206px;width:103px;height:24px;"></div><div class="t" style="left:443.32px;top:1213.69px;font-size:11px;line-height:11px;color:#000;letter-spacing:-0.034px;">Exclude Regions...</div><div class="btn" style="left:258px;top:1241px;width:85px;height:23px;"></div><div class="t" style="left:268.52px;top:1247.69px;font-size:11px;line-height:11px;color:#8d8d8d;letter-spacing:0.011px;">Find Another</div><div style="left:166px;top:1200px;width:86px;height:30px;border:3px solid #a349a4;"></div><div style="left:346px;top:1200px;width:195px;height:31px;border:3px solid #00a2e8;"></div><div style="left:31px;top:1295px;width:126px;height:25px;border:3px solid #00a2e8;"></div><div class="btn" style="left:34px;top:1298px;width:124px;height:23px;"></div><div class="t" style="left:43.32px;top:1305.69px;font-size:11px;line-height:11px;color:#000;letter-spacing:0.164px;">Detrend Lightcurve...</div><div class="btn" style="left:264px;top:1329px;width:74px;height:21px;"></div><div class="t" style="left:288.62px;top:1334.69px;font-size:11px;line-height:11px;color:#000;letter-spacing:-0.053px;">Done</div></body></html>
